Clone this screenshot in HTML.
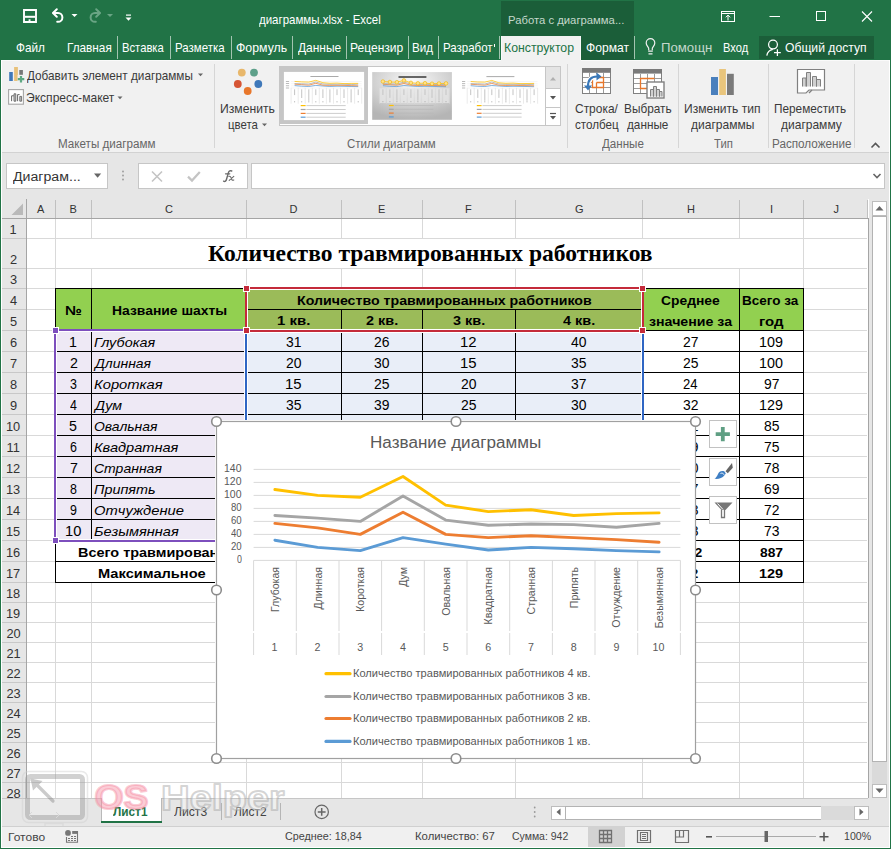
<!DOCTYPE html>
<html><head><meta charset="utf-8"><style>
html,body{margin:0;padding:0;width:891px;height:849px;overflow:hidden;background:#fff;}
.a{position:absolute;box-sizing:border-box;}
.t{position:absolute;white-space:nowrap;line-height:1;}
svg{position:absolute;overflow:visible;}
</style></head><body>
<div class="a" style="left:0px;top:0px;width:891px;height:60px;background:#217346;"></div>
<div class="a" style="left:501px;top:1px;width:133px;height:59px;background:#1b5e39;"></div>
<div class="a" style="left:501px;top:36px;width:80px;height:24px;background:#f1f1f1;"></div>
<div class="a" style="left:501px;top:36px;width:1px;height:24px;background:#fafafa;"></div>
<div class="a" style="left:580px;top:36px;width:1px;height:24px;background:#fafafa;"></div>
<svg style="left:0;top:0" width="140" height="34" viewBox="0 0 140 34">
<path d="M24 10h12v12h-12z" fill="none" stroke="#fff" stroke-width="1.9"/>
<rect x="25" y="15.8" width="10" height="2" fill="#fff"/>
<rect x="28.6" y="19.3" width="1.9" height="2.6" fill="#fff"/>
<g fill="none" stroke="#fff" stroke-width="2" stroke-linecap="round" stroke-linejoin="round">
<path d="M53.5 13H58a4.4 4.4 0 0 1 0 8.8h-0.8"/>
<path d="M56.8 9.3L53 13l3.8 3.7"/>
</g>
<path d="M71.5 14h6l-3 3z" fill="#fff"/>
<g fill="none" stroke="#6aa585" stroke-width="2" stroke-linecap="round" stroke-linejoin="round">
<path d="M99.5 13H95a4.4 4.4 0 0 0 0 8.8h0.8"/>
<path d="M96.2 9.3L100 13l-3.8 3.7"/>
</g>
<path d="M107 14h6l-3 3z" fill="#6aa585"/>
<path d="M126 14.5h5v1.2h-5z" fill="#fff"/>
<path d="M125.5 17.5h6l-3 3.2z" fill="#fff"/>
</svg>
<div class="t" style="left:259.10px;top:14.00px;font-family:'Liberation Sans', sans-serif;font-size:12.6px;color:#fff;font-weight:normal;font-style:normal;transform:scaleX(0.9120);transform-origin:0 0;">диаграммы.xlsx - Excel</div>
<div class="t" style="left:508.44px;top:15.00px;font-family:'Liberation Sans', sans-serif;font-size:11.8px;color:#c5d8cc;font-weight:normal;font-style:normal;transform:scaleX(0.9575);transform-origin:0 0;">Работа с диаграмма...</div>
<svg style="left:700px;top:0" width="191" height="34" viewBox="0 0 191 34">
<g fill="none" stroke="#fff" stroke-width="1">
<rect x="21.5" y="11.5" width="13" height="10"/>
<path d="M21.5 13.5h13"/>
<path d="M28 20.5v-5.5M25.8 17.3l2.2-2.2 2.2 2.2"/>
<path d="M69.5 16.5h10.5"/>
<rect x="116.5" y="11.5" width="9" height="9"/>
<path d="M162 11.5l10 10M172 11.5l-10 10" stroke-width="1.1"/>
</g></svg>
<div class="t" style="left:16.20px;top:42.00px;font-family:'Liberation Sans', sans-serif;font-size:12.8px;color:#fff;font-weight:normal;font-style:normal;transform:scaleX(0.9161);transform-origin:0 0;">Файл</div>
<div class="t" style="left:67.38px;top:42.00px;font-family:'Liberation Sans', sans-serif;font-size:12.8px;color:#fff;font-weight:normal;font-style:normal;transform:scaleX(0.9191);transform-origin:0 0;">Главная</div>
<div class="t" style="left:122.12px;top:42.00px;font-family:'Liberation Sans', sans-serif;font-size:12.8px;color:#fff;font-weight:normal;font-style:normal;transform:scaleX(0.8787);transform-origin:0 0;">Вставка</div>
<div class="t" style="left:174.50px;top:42.00px;font-family:'Liberation Sans', sans-serif;font-size:12.8px;color:#fff;font-weight:normal;font-style:normal;transform:scaleX(0.8964);transform-origin:0 0;">Разметка</div>
<div class="t" style="left:236.00px;top:42.00px;font-family:'Liberation Sans', sans-serif;font-size:12.8px;color:#fff;font-weight:normal;font-style:normal;transform:scaleX(0.9623);transform-origin:0 0;">Формуль</div>
<div class="t" style="left:298.00px;top:42.00px;font-family:'Liberation Sans', sans-serif;font-size:12.8px;color:#fff;font-weight:normal;font-style:normal;transform:scaleX(0.9348);transform-origin:0 0;">Данные</div>
<div class="t" style="left:350.06px;top:42.00px;font-family:'Liberation Sans', sans-serif;font-size:12.8px;color:#fff;font-weight:normal;font-style:normal;transform:scaleX(0.9400);transform-origin:0 0;">Рецензир</div>
<div class="t" style="left:412.09px;top:42.00px;font-family:'Liberation Sans', sans-serif;font-size:12.8px;color:#fff;font-weight:normal;font-style:normal;transform:scaleX(0.9091);transform-origin:0 0;">Вид</div>
<div class="t" style="left:442.70px;top:42.00px;font-family:'Liberation Sans', sans-serif;font-size:12.8px;color:#fff;font-weight:normal;font-style:normal;transform:scaleX(0.8981);transform-origin:0 0;">Разработ</div>
<div class="a" style="left:117px;top:36px;width:1px;height:23px;background:#a3c4b0;"></div>
<div class="a" style="left:170px;top:36px;width:1px;height:23px;background:#a3c4b0;"></div>
<div class="a" style="left:231px;top:36px;width:1px;height:23px;background:#a3c4b0;"></div>
<div class="a" style="left:292px;top:36px;width:1px;height:23px;background:#a3c4b0;"></div>
<div class="a" style="left:346px;top:36px;width:1px;height:23px;background:#a3c4b0;"></div>
<div class="a" style="left:408px;top:36px;width:1px;height:23px;background:#a3c4b0;"></div>
<div class="a" style="left:438px;top:36px;width:1px;height:23px;background:#a3c4b0;"></div>
<div class="a" style="left:499px;top:36px;width:1px;height:23px;background:#a3c4b0;"></div>
<div class="a" style="left:634px;top:36px;width:1px;height:23px;background:#a3c4b0;"></div>
<div class="a" style="left:494px;top:44px;width:1px;height:3px;background:#fff;"></div>
<div class="t" style="left:504.34px;top:42.00px;font-family:'Liberation Sans', sans-serif;font-size:12.8px;color:#217346;font-weight:normal;font-style:normal;transform:scaleX(0.9597);transform-origin:0 0;">Конструктор</div>
<div class="t" style="left:586.00px;top:42.00px;font-family:'Liberation Sans', sans-serif;font-size:12.8px;color:#fff;font-weight:normal;font-style:normal;transform:scaleX(0.9467);transform-origin:0 0;">Формат</div>
<div class="a" style="left:759px;top:36px;width:115px;height:23px;background:#1b5e39;"></div>
<svg style="left:0;top:0" width="891" height="60">
<g fill="none" stroke="#f0f0f0" stroke-width="1.2">
<path d="M648.7 50.2v-1.6c0-1.5-2.5-3-2.5-5.7a4.3 4.3 0 0 1 8.6 0c0 2.7-2.5 4.2-2.5 5.7v1.6"/>
<path d="M648.2 51.2h4.6M648.5 53.8h4"/>
</g>
<g fill="none" stroke="#fff" stroke-width="1.25">
<circle cx="773" cy="44.6" r="4.4"/>
<path d="M766.8 55.6c0.6-3.4 2.8-5.8 6-6.3"/>
<path d="M777.4 49.2v6.8M774 52.6h6.8"/>
</g></svg>
<div class="t" style="left:660.97px;top:42.00px;font-family:'Liberation Sans', sans-serif;font-size:12.8px;color:#c5d8cc;font-weight:normal;font-style:normal;transform:scaleX(1.0292);transform-origin:0 0;">Помощн</div>
<div class="t" style="left:723.43px;top:42.00px;font-family:'Liberation Sans', sans-serif;font-size:12.8px;color:#fff;font-weight:normal;font-style:normal;transform:scaleX(0.8679);transform-origin:0 0;">Вход</div>
<div class="t" style="left:785.20px;top:42.00px;font-family:'Liberation Sans', sans-serif;font-size:12.8px;color:#fff;font-weight:normal;font-style:normal;transform:scaleX(0.9482);transform-origin:0 0;">Общий доступ</div>
<div class="a" style="left:0px;top:60px;width:891px;height:92px;background:#f1f1f1;"></div>
<div class="a" style="left:1px;top:60px;width:500px;height:1px;background:#fafafa;"></div>
<div class="a" style="left:581px;top:60px;width:309px;height:1px;background:#fafafa;"></div>
<div class="a" style="left:0px;top:152px;width:891px;height:1px;background:#d2d2d2;"></div>
<div class="a" style="left:214px;top:64px;width:1px;height:84px;background:#d6d6d6;"></div>
<div class="a" style="left:567px;top:64px;width:1px;height:84px;background:#d6d6d6;"></div>
<div class="a" style="left:678px;top:64px;width:1px;height:84px;background:#d6d6d6;"></div>
<div class="a" style="left:768px;top:64px;width:1px;height:84px;background:#d6d6d6;"></div>
<div class="a" style="left:854px;top:64px;width:1px;height:84px;background:#d6d6d6;"></div>
<svg style="left:0;top:60px" width="891" height="91" viewBox="0 60 891 91">
<rect x="9.2" y="72" width="3.6" height="9" fill="#3f78b9"/>
<rect x="14.1" y="67" width="3.8" height="14" fill="#e8c17a"/>
<rect x="19.3" y="70" width="3.6" height="4.8" fill="#777"/>
<rect x="17.6" y="75" width="7" height="7" fill="#f1f1f1"/><path d="M21 76v6.5M17.8 79.2h6.5" stroke="#5ea883" stroke-width="2.2"/>
<rect x="8.6" y="89.6" width="14.8" height="14.6" fill="#fff" stroke="#a6a6a6" stroke-width="1.1"/>
<path d="M14 101.2v-7.4h1.8v7.4z" fill="#c8c8c8" stroke="#666" stroke-width="0.9"/>
<path d="M19.8 101.2v-4.8h1.8v4.8z" fill="#c8c8c8" stroke="#666" stroke-width="0.9"/>
<path d="M11.6 101.2v-5.4h2.2M17.6 101.2v-6.6h2" fill="none" stroke="#666" stroke-width="1"/>
<path d="M198 73.5h5l-2.5 2.8z" fill="#666"/>
<path d="M117.5 96.5h5l-2.5 2.8z" fill="#666"/>
<circle cx="241.8" cy="72.6" r="3.9" fill="#e8b76b"/>
<circle cx="254" cy="72.6" r="3.9" fill="#5ea08a"/>
<circle cx="237.8" cy="84" r="3.9" fill="#d65534"/>
<circle cx="258.3" cy="84" r="3.9" fill="#3f78b9"/>
<circle cx="247.7" cy="91" r="3.9" fill="#e8772b"/>
<path d="M262 123.5h5l-2.5 2.8z" fill="#666"/>
</svg>
<div class="t" style="left:27.00px;top:69.00px;font-family:'Liberation Sans', sans-serif;font-size:13.2px;color:#3a3a3a;font-weight:normal;font-style:normal;transform:scaleX(0.8903);transform-origin:0 0;">Добавить элемент диаграммы</div>
<div class="t" style="left:26.09px;top:91.00px;font-family:'Liberation Sans', sans-serif;font-size:13.2px;color:#3a3a3a;font-weight:normal;font-style:normal;transform:scaleX(0.9146);transform-origin:0 0;">Экспресс-макет</div>
<div class="t" style="left:58.05px;top:138.00px;font-family:'Liberation Sans', sans-serif;font-size:12.3px;color:#666;font-weight:normal;font-style:normal;transform:scaleX(0.9461);transform-origin:0 0;">Макеты диаграмм</div>
<div class="t" style="left:220.38px;top:102.00px;font-family:'Liberation Sans', sans-serif;font-size:13.2px;color:#3a3a3a;font-weight:normal;font-style:normal;transform:scaleX(0.9224);transform-origin:0 0;">Изменить</div>
<div class="t" style="left:228.43px;top:118.00px;font-family:'Liberation Sans', sans-serif;font-size:13.2px;color:#3a3a3a;font-weight:normal;font-style:normal;transform:scaleX(0.8676);transform-origin:0 0;">цвета</div>
<div class="t" style="left:347.00px;top:138.00px;font-family:'Liberation Sans', sans-serif;font-size:12.3px;color:#666;font-weight:normal;font-style:normal;transform:scaleX(0.9362);transform-origin:0 0;">Стили диаграмм</div>
<div class="t" style="left:575.30px;top:102.00px;font-family:'Liberation Sans', sans-serif;font-size:13.2px;color:#3a3a3a;font-weight:normal;font-style:normal;transform:scaleX(0.9062);transform-origin:0 0;">Строка/</div>
<div class="t" style="left:574.60px;top:118.00px;font-family:'Liberation Sans', sans-serif;font-size:13.2px;color:#3a3a3a;font-weight:normal;font-style:normal;transform:scaleX(0.8840);transform-origin:0 0;">столбец</div>
<div class="t" style="left:623.50px;top:102.00px;font-family:'Liberation Sans', sans-serif;font-size:13.2px;color:#3a3a3a;font-weight:normal;font-style:normal;transform:scaleX(0.8962);transform-origin:0 0;">Выбрать</div>
<div class="t" style="left:627.00px;top:118.00px;font-family:'Liberation Sans', sans-serif;font-size:13.2px;color:#3a3a3a;font-weight:normal;font-style:normal;transform:scaleX(0.8913);transform-origin:0 0;">данные</div>
<div class="t" style="left:602.00px;top:138.00px;font-family:'Liberation Sans', sans-serif;font-size:12.3px;color:#666;font-weight:normal;font-style:normal;transform:scaleX(0.9432);transform-origin:0 0;">Данные</div>
<div class="t" style="left:684.39px;top:102.00px;font-family:'Liberation Sans', sans-serif;font-size:13.2px;color:#3a3a3a;font-weight:normal;font-style:normal;transform:scaleX(0.9146);transform-origin:0 0;">Изменить тип</div>
<div class="t" style="left:691.00px;top:118.00px;font-family:'Liberation Sans', sans-serif;font-size:13.2px;color:#3a3a3a;font-weight:normal;font-style:normal;transform:scaleX(0.9130);transform-origin:0 0;">диаграммы</div>
<div class="t" style="left:714.40px;top:138.00px;font-family:'Liberation Sans', sans-serif;font-size:12.3px;color:#666;font-weight:normal;font-style:normal;transform:scaleX(0.9200);transform-origin:0 0;">Тип</div>
<div class="t" style="left:774.41px;top:102.00px;font-family:'Liberation Sans', sans-serif;font-size:13.2px;color:#3a3a3a;font-weight:normal;font-style:normal;transform:scaleX(0.8938);transform-origin:0 0;">Переместить</div>
<div class="t" style="left:780.70px;top:118.00px;font-family:'Liberation Sans', sans-serif;font-size:13.2px;color:#3a3a3a;font-weight:normal;font-style:normal;transform:scaleX(0.9104);transform-origin:0 0;">диаграмму</div>
<div class="t" style="left:771.55px;top:138.00px;font-family:'Liberation Sans', sans-serif;font-size:12.3px;color:#666;font-weight:normal;font-style:normal;transform:scaleX(0.9512);transform-origin:0 0;">Расположение</div>
<div class="a" style="left:0px;top:153px;width:891px;height:46px;background:#e6e6e6;"></div>
<div class="a" style="left:6px;top:163px;width:102px;height:26px;background:#fff;border:1px solid #c6c6c6;"></div>
<div class="a" style="left:138px;top:163px;width:110px;height:26px;background:#fff;border:1px solid #c6c6c6;"></div>
<div class="a" style="left:251px;top:163px;width:634px;height:26px;background:#fff;border:1px solid #c6c6c6;"></div>
<div class="t" style="left:12.80px;top:171.00px;font-family:'Liberation Sans', sans-serif;font-size:12.3px;color:#333;font-weight:normal;font-style:normal;transform:scaleX(1.1500);transform-origin:0 0;">Диаграм...</div>
<svg style="left:0;top:152px" width="891" height="47" viewBox="0 152 891 47">
<path d="M94 173.6h7.2l-3.6 4.2z" fill="#666"/>
<circle cx="123" cy="171.5" r="0.9" fill="#999"/><circle cx="123" cy="175.5" r="0.9" fill="#999"/><circle cx="123" cy="179.5" r="0.9" fill="#999"/>
<path d="M152 171.5l10 10M162 171.5l-10 10" stroke="#c4c4c4" stroke-width="1.6" fill="none"/>
<path d="M188 176.6l4 4 7.8-8.6" stroke="#c4c4c4" stroke-width="2.2" fill="none"/>
<path d="M873.5 174l3.5 3.5 3.5-3.5" stroke="#666" stroke-width="1.6" fill="none"/>
</svg>
<svg style="left:0;top:0" width="891" height="200"><g fill="none" stroke="#6a6a6a" stroke-linecap="round">
<path d="M223.6 181.2c1.4 0.8 2.6-0.2 3-2.2l1.9-6.6c0.5-1.6 1.8-2.1 3.3-1.4" stroke-width="1.4"/>
<path d="M225.5 173.8h4.3" stroke-width="1.2"/>
<path d="M228.8 176.4c1.2-0.4 1.8 0 2.2 1.2l0.6 1.6c0.4 1 1.2 1.2 2.2 0.8M233.8 176.4l-4.6 4" stroke-width="1.1"/>
</g></svg>
<div class="a" style="left:0px;top:199px;width:868px;height:19px;background:#e6e6e6;"></div>
<div class="a" style="left:0px;top:218px;width:26px;height:580px;background:#e6e6e6;"></div>
<div class="a" style="left:26px;top:218px;width:842px;height:580px;background:#fff;"></div>
<svg style="left:0;top:199px" width="26" height="19"><path d="M23 4.5V16H11.5z" fill="#b9b9b9"/></svg>
<div class="a" style="left:26px;top:200px;width:1px;height:18px;background:#c0c0c0;"></div>
<div class="a" style="left:55px;top:200px;width:1px;height:18px;background:#c0c0c0;"></div>
<div class="a" style="left:91px;top:200px;width:1px;height:18px;background:#c0c0c0;"></div>
<div class="a" style="left:246px;top:200px;width:1px;height:18px;background:#c0c0c0;"></div>
<div class="a" style="left:341px;top:200px;width:1px;height:18px;background:#c0c0c0;"></div>
<div class="a" style="left:422px;top:200px;width:1px;height:18px;background:#c0c0c0;"></div>
<div class="a" style="left:515px;top:200px;width:1px;height:18px;background:#c0c0c0;"></div>
<div class="a" style="left:642px;top:200px;width:1px;height:18px;background:#c0c0c0;"></div>
<div class="a" style="left:739px;top:200px;width:1px;height:18px;background:#c0c0c0;"></div>
<div class="a" style="left:803px;top:200px;width:1px;height:18px;background:#c0c0c0;"></div>
<div class="a" style="left:0px;top:218px;width:869px;height:1px;background:#a5a5a5;"></div>
<div class="a" style="left:26px;top:199px;width:1px;height:599px;background:#a5a5a5;"></div>
<div class="a" style="left:867px;top:200px;width:1px;height:18px;background:#c0c0c0;"></div>
<div class="a" style="left:868px;top:218px;width:1px;height:580px;background:#a5a5a5;"></div>
<div class="a" style="left:0px;top:238px;width:26px;height:1px;background:#c8c8c8;"></div>
<div class="a" style="left:0px;top:268px;width:26px;height:1px;background:#c8c8c8;"></div>
<div class="a" style="left:0px;top:288px;width:26px;height:1px;background:#c8c8c8;"></div>
<div class="a" style="left:0px;top:309px;width:26px;height:1px;background:#c8c8c8;"></div>
<div class="a" style="left:0px;top:330px;width:26px;height:1px;background:#c8c8c8;"></div>
<div class="a" style="left:0px;top:351px;width:26px;height:1px;background:#c8c8c8;"></div>
<div class="a" style="left:0px;top:372px;width:26px;height:1px;background:#c8c8c8;"></div>
<div class="a" style="left:0px;top:393px;width:26px;height:1px;background:#c8c8c8;"></div>
<div class="a" style="left:0px;top:414px;width:26px;height:1px;background:#c8c8c8;"></div>
<div class="a" style="left:0px;top:435px;width:26px;height:1px;background:#c8c8c8;"></div>
<div class="a" style="left:0px;top:456px;width:26px;height:1px;background:#c8c8c8;"></div>
<div class="a" style="left:0px;top:477px;width:26px;height:1px;background:#c8c8c8;"></div>
<div class="a" style="left:0px;top:498px;width:26px;height:1px;background:#c8c8c8;"></div>
<div class="a" style="left:0px;top:519px;width:26px;height:1px;background:#c8c8c8;"></div>
<div class="a" style="left:0px;top:540px;width:26px;height:1px;background:#c8c8c8;"></div>
<div class="a" style="left:0px;top:561px;width:26px;height:1px;background:#c8c8c8;"></div>
<div class="a" style="left:0px;top:582px;width:26px;height:1px;background:#c8c8c8;"></div>
<div class="a" style="left:0px;top:602px;width:26px;height:1px;background:#c8c8c8;"></div>
<div class="a" style="left:0px;top:622px;width:26px;height:1px;background:#c8c8c8;"></div>
<div class="a" style="left:0px;top:642px;width:26px;height:1px;background:#c8c8c8;"></div>
<div class="a" style="left:0px;top:662px;width:26px;height:1px;background:#c8c8c8;"></div>
<div class="a" style="left:0px;top:682px;width:26px;height:1px;background:#c8c8c8;"></div>
<div class="a" style="left:0px;top:702px;width:26px;height:1px;background:#c8c8c8;"></div>
<div class="a" style="left:0px;top:722px;width:26px;height:1px;background:#c8c8c8;"></div>
<div class="a" style="left:0px;top:742px;width:26px;height:1px;background:#c8c8c8;"></div>
<div class="a" style="left:0px;top:762px;width:26px;height:1px;background:#c8c8c8;"></div>
<div class="a" style="left:0px;top:782px;width:26px;height:1px;background:#c8c8c8;"></div>
<div class="a" style="left:0px;top:802px;width:26px;height:1px;background:#c8c8c8;"></div>
<div class="t" style="left:37.00px;top:204.00px;font-family:'Liberation Sans', sans-serif;font-size:11px;color:#333;font-weight:normal;font-style:normal;">A</div>
<div class="t" style="left:69.50px;top:204.00px;font-family:'Liberation Sans', sans-serif;font-size:11px;color:#333;font-weight:normal;font-style:normal;">B</div>
<div class="t" style="left:165.00px;top:204.00px;font-family:'Liberation Sans', sans-serif;font-size:11px;color:#333;font-weight:normal;font-style:normal;">C</div>
<div class="t" style="left:289.50px;top:204.00px;font-family:'Liberation Sans', sans-serif;font-size:11px;color:#333;font-weight:normal;font-style:normal;">D</div>
<div class="t" style="left:378.00px;top:204.00px;font-family:'Liberation Sans', sans-serif;font-size:11px;color:#333;font-weight:normal;font-style:normal;">E</div>
<div class="t" style="left:465.00px;top:204.00px;font-family:'Liberation Sans', sans-serif;font-size:11px;color:#333;font-weight:normal;font-style:normal;">F</div>
<div class="t" style="left:575.00px;top:204.00px;font-family:'Liberation Sans', sans-serif;font-size:11px;color:#333;font-weight:normal;font-style:normal;">G</div>
<div class="t" style="left:687.00px;top:204.00px;font-family:'Liberation Sans', sans-serif;font-size:11px;color:#333;font-weight:normal;font-style:normal;">H</div>
<div class="t" style="left:770.00px;top:204.00px;font-family:'Liberation Sans', sans-serif;font-size:11px;color:#333;font-weight:normal;font-style:normal;">I</div>
<div class="t" style="left:833.50px;top:204.00px;font-family:'Liberation Sans', sans-serif;font-size:11px;color:#333;font-weight:normal;font-style:normal;">J</div>
<div class="t" style="left:9.50px;top:224.00px;font-family:'Liberation Sans', sans-serif;font-size:12.8px;color:#333;font-weight:normal;font-style:normal;">1</div>
<div class="t" style="left:10.00px;top:254.00px;font-family:'Liberation Sans', sans-serif;font-size:12.8px;color:#333;font-weight:normal;font-style:normal;">2</div>
<div class="t" style="left:10.00px;top:274.00px;font-family:'Liberation Sans', sans-serif;font-size:12.8px;color:#333;font-weight:normal;font-style:normal;">3</div>
<div class="t" style="left:10.00px;top:295.00px;font-family:'Liberation Sans', sans-serif;font-size:12.8px;color:#333;font-weight:normal;font-style:normal;">4</div>
<div class="t" style="left:10.00px;top:316.00px;font-family:'Liberation Sans', sans-serif;font-size:12.8px;color:#333;font-weight:normal;font-style:normal;">5</div>
<div class="t" style="left:10.00px;top:337.00px;font-family:'Liberation Sans', sans-serif;font-size:12.8px;color:#333;font-weight:normal;font-style:normal;">6</div>
<div class="t" style="left:10.00px;top:358.00px;font-family:'Liberation Sans', sans-serif;font-size:12.8px;color:#333;font-weight:normal;font-style:normal;">7</div>
<div class="t" style="left:10.00px;top:379.00px;font-family:'Liberation Sans', sans-serif;font-size:12.8px;color:#333;font-weight:normal;font-style:normal;">8</div>
<div class="t" style="left:10.00px;top:400.00px;font-family:'Liberation Sans', sans-serif;font-size:12.8px;color:#333;font-weight:normal;font-style:normal;">9</div>
<div class="t" style="left:6.00px;top:421.00px;font-family:'Liberation Sans', sans-serif;font-size:12.8px;color:#333;font-weight:normal;font-style:normal;">10</div>
<div class="t" style="left:6.50px;top:442.00px;font-family:'Liberation Sans', sans-serif;font-size:12.8px;color:#333;font-weight:normal;font-style:normal;">11</div>
<div class="t" style="left:6.00px;top:463.00px;font-family:'Liberation Sans', sans-serif;font-size:12.8px;color:#333;font-weight:normal;font-style:normal;">12</div>
<div class="t" style="left:6.00px;top:484.00px;font-family:'Liberation Sans', sans-serif;font-size:12.8px;color:#333;font-weight:normal;font-style:normal;">13</div>
<div class="t" style="left:6.00px;top:505.00px;font-family:'Liberation Sans', sans-serif;font-size:12.8px;color:#333;font-weight:normal;font-style:normal;">14</div>
<div class="t" style="left:6.00px;top:526.00px;font-family:'Liberation Sans', sans-serif;font-size:12.8px;color:#333;font-weight:normal;font-style:normal;">15</div>
<div class="t" style="left:6.00px;top:547.00px;font-family:'Liberation Sans', sans-serif;font-size:12.8px;color:#333;font-weight:normal;font-style:normal;">16</div>
<div class="t" style="left:6.00px;top:568.00px;font-family:'Liberation Sans', sans-serif;font-size:12.8px;color:#333;font-weight:normal;font-style:normal;">17</div>
<div class="t" style="left:6.00px;top:588.00px;font-family:'Liberation Sans', sans-serif;font-size:12.8px;color:#333;font-weight:normal;font-style:normal;">18</div>
<div class="t" style="left:6.00px;top:608.00px;font-family:'Liberation Sans', sans-serif;font-size:12.8px;color:#333;font-weight:normal;font-style:normal;">19</div>
<div class="t" style="left:6.50px;top:628.00px;font-family:'Liberation Sans', sans-serif;font-size:12.8px;color:#333;font-weight:normal;font-style:normal;">20</div>
<div class="t" style="left:6.50px;top:648.00px;font-family:'Liberation Sans', sans-serif;font-size:12.8px;color:#333;font-weight:normal;font-style:normal;">21</div>
<div class="t" style="left:6.50px;top:668.00px;font-family:'Liberation Sans', sans-serif;font-size:12.8px;color:#333;font-weight:normal;font-style:normal;">22</div>
<div class="t" style="left:6.50px;top:688.00px;font-family:'Liberation Sans', sans-serif;font-size:12.8px;color:#333;font-weight:normal;font-style:normal;">23</div>
<div class="t" style="left:6.50px;top:708.00px;font-family:'Liberation Sans', sans-serif;font-size:12.8px;color:#333;font-weight:normal;font-style:normal;">24</div>
<div class="t" style="left:6.50px;top:728.00px;font-family:'Liberation Sans', sans-serif;font-size:12.8px;color:#333;font-weight:normal;font-style:normal;">25</div>
<div class="t" style="left:6.50px;top:748.00px;font-family:'Liberation Sans', sans-serif;font-size:12.8px;color:#333;font-weight:normal;font-style:normal;">26</div>
<div class="t" style="left:6.50px;top:768.00px;font-family:'Liberation Sans', sans-serif;font-size:12.8px;color:#333;font-weight:normal;font-style:normal;">27</div>
<div class="a" style="left:27px;top:238px;width:840px;height:1px;background:#d9d9d9;"></div>
<div class="a" style="left:27px;top:268px;width:840px;height:1px;background:#d9d9d9;"></div>
<div class="a" style="left:27px;top:288px;width:840px;height:1px;background:#d9d9d9;"></div>
<div class="a" style="left:27px;top:309px;width:840px;height:1px;background:#d9d9d9;"></div>
<div class="a" style="left:27px;top:330px;width:840px;height:1px;background:#d9d9d9;"></div>
<div class="a" style="left:27px;top:351px;width:840px;height:1px;background:#d9d9d9;"></div>
<div class="a" style="left:27px;top:372px;width:840px;height:1px;background:#d9d9d9;"></div>
<div class="a" style="left:27px;top:393px;width:840px;height:1px;background:#d9d9d9;"></div>
<div class="a" style="left:27px;top:414px;width:840px;height:1px;background:#d9d9d9;"></div>
<div class="a" style="left:27px;top:435px;width:840px;height:1px;background:#d9d9d9;"></div>
<div class="a" style="left:27px;top:456px;width:840px;height:1px;background:#d9d9d9;"></div>
<div class="a" style="left:27px;top:477px;width:840px;height:1px;background:#d9d9d9;"></div>
<div class="a" style="left:27px;top:498px;width:840px;height:1px;background:#d9d9d9;"></div>
<div class="a" style="left:27px;top:519px;width:840px;height:1px;background:#d9d9d9;"></div>
<div class="a" style="left:27px;top:540px;width:840px;height:1px;background:#d9d9d9;"></div>
<div class="a" style="left:27px;top:561px;width:840px;height:1px;background:#d9d9d9;"></div>
<div class="a" style="left:27px;top:582px;width:840px;height:1px;background:#d9d9d9;"></div>
<div class="a" style="left:27px;top:602px;width:840px;height:1px;background:#d9d9d9;"></div>
<div class="a" style="left:27px;top:622px;width:840px;height:1px;background:#d9d9d9;"></div>
<div class="a" style="left:27px;top:642px;width:840px;height:1px;background:#d9d9d9;"></div>
<div class="a" style="left:27px;top:662px;width:840px;height:1px;background:#d9d9d9;"></div>
<div class="a" style="left:27px;top:682px;width:840px;height:1px;background:#d9d9d9;"></div>
<div class="a" style="left:27px;top:702px;width:840px;height:1px;background:#d9d9d9;"></div>
<div class="a" style="left:27px;top:722px;width:840px;height:1px;background:#d9d9d9;"></div>
<div class="a" style="left:27px;top:742px;width:840px;height:1px;background:#d9d9d9;"></div>
<div class="a" style="left:27px;top:762px;width:840px;height:1px;background:#d9d9d9;"></div>
<div class="a" style="left:27px;top:782px;width:840px;height:1px;background:#d9d9d9;"></div>
<div class="a" style="left:55px;top:219px;width:1px;height:579px;background:#d9d9d9;"></div>
<div class="a" style="left:91px;top:219px;width:1px;height:19px;background:#d9d9d9;"></div>
<div class="a" style="left:91px;top:269px;width:1px;height:529px;background:#d9d9d9;"></div>
<div class="a" style="left:246px;top:219px;width:1px;height:19px;background:#d9d9d9;"></div>
<div class="a" style="left:246px;top:269px;width:1px;height:529px;background:#d9d9d9;"></div>
<div class="a" style="left:341px;top:219px;width:1px;height:19px;background:#d9d9d9;"></div>
<div class="a" style="left:341px;top:269px;width:1px;height:529px;background:#d9d9d9;"></div>
<div class="a" style="left:422px;top:219px;width:1px;height:19px;background:#d9d9d9;"></div>
<div class="a" style="left:422px;top:269px;width:1px;height:529px;background:#d9d9d9;"></div>
<div class="a" style="left:515px;top:219px;width:1px;height:19px;background:#d9d9d9;"></div>
<div class="a" style="left:515px;top:269px;width:1px;height:529px;background:#d9d9d9;"></div>
<div class="a" style="left:642px;top:219px;width:1px;height:19px;background:#d9d9d9;"></div>
<div class="a" style="left:642px;top:269px;width:1px;height:529px;background:#d9d9d9;"></div>
<div class="a" style="left:739px;top:219px;width:1px;height:19px;background:#d9d9d9;"></div>
<div class="a" style="left:739px;top:269px;width:1px;height:529px;background:#d9d9d9;"></div>
<div class="a" style="left:803px;top:219px;width:1px;height:579px;background:#d9d9d9;"></div>
<div class="t" style="left:207.60px;top:243.00px;font-family:'Liberation Serif', serif;font-size:22.5px;color:#000;font-weight:bold;font-style:normal;transform:scaleX(1.0464);transform-origin:0 0;">Количество травмированных работников</div>
<div class="a" style="left:55px;top:288px;width:191px;height:42px;background:#92d050;"></div>
<div class="a" style="left:642px;top:288px;width:161px;height:42px;background:#92d050;"></div>
<div class="a" style="left:246px;top:288px;width:396px;height:42px;background:#9bbb59;"></div>
<div class="a" style="left:55px;top:330px;width:191px;height:210px;background:#eee9f5;"></div>
<div class="a" style="left:246px;top:330px;width:396px;height:210px;background:#e9eef8;"></div>
<div class="a" style="left:55px;top:540px;width:748px;height:42px;background:#fff;"></div>
<div class="a" style="left:642px;top:330px;width:161px;height:210px;background:#fff;"></div>
<div class="a" style="left:55px;top:288px;width:749px;height:1px;background:#000;"></div>
<div class="a" style="left:246px;top:309px;width:396px;height:1px;background:#000;"></div>
<div class="a" style="left:55px;top:330px;width:749px;height:1px;background:#000;"></div>
<div class="a" style="left:55px;top:351px;width:749px;height:1px;background:#000;"></div>
<div class="a" style="left:55px;top:372px;width:749px;height:1px;background:#000;"></div>
<div class="a" style="left:55px;top:393px;width:749px;height:1px;background:#000;"></div>
<div class="a" style="left:55px;top:414px;width:749px;height:1px;background:#000;"></div>
<div class="a" style="left:55px;top:435px;width:749px;height:1px;background:#000;"></div>
<div class="a" style="left:55px;top:456px;width:749px;height:1px;background:#000;"></div>
<div class="a" style="left:55px;top:477px;width:749px;height:1px;background:#000;"></div>
<div class="a" style="left:55px;top:498px;width:749px;height:1px;background:#000;"></div>
<div class="a" style="left:55px;top:519px;width:749px;height:1px;background:#000;"></div>
<div class="a" style="left:55px;top:540px;width:749px;height:1px;background:#000;"></div>
<div class="a" style="left:55px;top:561px;width:749px;height:1px;background:#000;"></div>
<div class="a" style="left:55px;top:582px;width:749px;height:1px;background:#000;"></div>
<div class="a" style="left:55px;top:288px;width:1px;height:295px;background:#000;"></div>
<div class="a" style="left:91px;top:288px;width:1px;height:253px;background:#000;"></div>
<div class="a" style="left:246px;top:288px;width:1px;height:295px;background:#000;"></div>
<div class="a" style="left:642px;top:288px;width:1px;height:295px;background:#000;"></div>
<div class="a" style="left:739px;top:288px;width:1px;height:295px;background:#000;"></div>
<div class="a" style="left:803px;top:288px;width:1px;height:295px;background:#000;"></div>
<div class="a" style="left:341px;top:309px;width:1px;height:232px;background:#000;"></div>
<div class="a" style="left:422px;top:309px;width:1px;height:232px;background:#000;"></div>
<div class="a" style="left:515px;top:309px;width:1px;height:232px;background:#000;"></div>
<div class="a" style="left:246px;top:540px;width:1px;height:43px;background:#000;"></div>
<div class="t" style="left:64.68px;top:304.00px;font-family:'Liberation Sans', sans-serif;font-size:13.5px;color:#000;font-weight:bold;font-style:normal;transform:scaleX(1.1214);transform-origin:0 0;">№</div>
<div class="t" style="left:111.87px;top:304.00px;font-family:'Liberation Sans', sans-serif;font-size:13.5px;color:#000;font-weight:bold;font-style:normal;transform:scaleX(1.0282);transform-origin:0 0;">Название шахты</div>
<div class="t" style="left:297.35px;top:294.00px;font-family:'Liberation Sans', sans-serif;font-size:13.5px;color:#000;font-weight:bold;font-style:normal;transform:scaleX(1.0502);transform-origin:0 0;">Количество травмированных работников</div>
<div class="t" style="left:276.89px;top:314.00px;font-family:'Liberation Sans', sans-serif;font-size:13.5px;color:#000;font-weight:bold;font-style:normal;transform:scaleX(1.1071);transform-origin:0 0;">1 кв.</div>
<div class="t" style="left:366.00px;top:314.00px;font-family:'Liberation Sans', sans-serif;font-size:13.5px;color:#000;font-weight:bold;font-style:normal;transform:scaleX(1.0690);transform-origin:0 0;">2 кв.</div>
<div class="t" style="left:453.00px;top:314.00px;font-family:'Liberation Sans', sans-serif;font-size:13.5px;color:#000;font-weight:bold;font-style:normal;transform:scaleX(1.0690);transform-origin:0 0;">3 кв.</div>
<div class="t" style="left:563.00px;top:314.00px;font-family:'Liberation Sans', sans-serif;font-size:13.5px;color:#000;font-weight:bold;font-style:normal;transform:scaleX(1.0690);transform-origin:0 0;">4 кв.</div>
<div class="t" style="left:661.40px;top:294.00px;font-family:'Liberation Sans', sans-serif;font-size:13.5px;color:#000;font-weight:bold;font-style:normal;transform:scaleX(1.0246);transform-origin:0 0;">Среднее</div>
<div class="t" style="left:648.60px;top:315.00px;font-family:'Liberation Sans', sans-serif;font-size:13.5px;color:#000;font-weight:bold;font-style:normal;transform:scaleX(1.0500);transform-origin:0 0;">значение за</div>
<div class="t" style="left:742.00px;top:294.00px;font-family:'Liberation Sans', sans-serif;font-size:13.5px;color:#000;font-weight:bold;font-style:normal;">Всего за</div>
<div class="t" style="left:758.69px;top:315.00px;font-family:'Liberation Sans', sans-serif;font-size:13.5px;color:#000;font-weight:bold;font-style:normal;transform:scaleX(1.1095);transform-origin:0 0;">год</div>
<div class="t" style="left:68.94px;top:335.00px;font-family:'Liberation Sans', sans-serif;font-size:14px;color:#000;font-weight:normal;font-style:normal;transform:scaleX(1.0143);transform-origin:0 0;">1</div>
<div class="t" style="left:94.20px;top:336.00px;font-family:'Liberation Sans', sans-serif;font-size:13.6px;color:#000;font-weight:normal;font-style:italic;transform:scaleX(1.0569);transform-origin:0 0;">Глубокая</div>
<div class="t" style="left:286.05px;top:335.00px;font-family:'Liberation Sans', sans-serif;font-size:14px;color:#000;font-weight:normal;font-style:normal;transform:scaleX(0.9933);transform-origin:0 0;">31</div>
<div class="t" style="left:374.05px;top:335.00px;font-family:'Liberation Sans', sans-serif;font-size:14px;color:#000;font-weight:normal;font-style:normal;transform:scaleX(0.9933);transform-origin:0 0;">26</div>
<div class="t" style="left:459.99px;top:335.00px;font-family:'Liberation Sans', sans-serif;font-size:14px;color:#000;font-weight:normal;font-style:normal;transform:scaleX(1.0643);transform-origin:0 0;">12</div>
<div class="t" style="left:571.05px;top:335.00px;font-family:'Liberation Sans', sans-serif;font-size:14px;color:#000;font-weight:normal;font-style:normal;transform:scaleX(0.9933);transform-origin:0 0;">40</div>
<div class="t" style="left:683.35px;top:335.00px;font-family:'Liberation Sans', sans-serif;font-size:14px;color:#000;font-weight:normal;font-style:normal;transform:scaleX(0.9933);transform-origin:0 0;">27</div>
<div class="t" style="left:759.23px;top:335.00px;font-family:'Liberation Sans', sans-serif;font-size:14px;color:#000;font-weight:normal;font-style:normal;transform:scaleX(1.0227);transform-origin:0 0;">109</div>
<div class="t" style="left:69.95px;top:356.00px;font-family:'Liberation Sans', sans-serif;font-size:14px;color:#000;font-weight:normal;font-style:normal;transform:scaleX(1.0143);transform-origin:0 0;">2</div>
<div class="t" style="left:95.23px;top:357.00px;font-family:'Liberation Sans', sans-serif;font-size:13.6px;color:#000;font-weight:normal;font-style:italic;transform:scaleX(1.0268);transform-origin:0 0;">Длинная</div>
<div class="t" style="left:286.05px;top:356.00px;font-family:'Liberation Sans', sans-serif;font-size:14px;color:#000;font-weight:normal;font-style:normal;transform:scaleX(0.9933);transform-origin:0 0;">20</div>
<div class="t" style="left:374.05px;top:356.00px;font-family:'Liberation Sans', sans-serif;font-size:14px;color:#000;font-weight:normal;font-style:normal;transform:scaleX(0.9933);transform-origin:0 0;">30</div>
<div class="t" style="left:459.99px;top:356.00px;font-family:'Liberation Sans', sans-serif;font-size:14px;color:#000;font-weight:normal;font-style:normal;transform:scaleX(1.0643);transform-origin:0 0;">15</div>
<div class="t" style="left:571.05px;top:356.00px;font-family:'Liberation Sans', sans-serif;font-size:14px;color:#000;font-weight:normal;font-style:normal;transform:scaleX(0.9933);transform-origin:0 0;">35</div>
<div class="t" style="left:683.35px;top:356.00px;font-family:'Liberation Sans', sans-serif;font-size:14px;color:#000;font-weight:normal;font-style:normal;transform:scaleX(0.9933);transform-origin:0 0;">25</div>
<div class="t" style="left:759.23px;top:356.00px;font-family:'Liberation Sans', sans-serif;font-size:14px;color:#000;font-weight:normal;font-style:normal;transform:scaleX(1.0227);transform-origin:0 0;">100</div>
<div class="t" style="left:69.95px;top:377.00px;font-family:'Liberation Sans', sans-serif;font-size:14px;color:#000;font-weight:normal;font-style:normal;transform:scaleX(0.8875);transform-origin:0 0;">3</div>
<div class="t" style="left:94.20px;top:378.00px;font-family:'Liberation Sans', sans-serif;font-size:13.6px;color:#000;font-weight:normal;font-style:italic;transform:scaleX(1.0841);transform-origin:0 0;">Короткая</div>
<div class="t" style="left:284.99px;top:377.00px;font-family:'Liberation Sans', sans-serif;font-size:14px;color:#000;font-weight:normal;font-style:normal;transform:scaleX(1.0643);transform-origin:0 0;">15</div>
<div class="t" style="left:374.05px;top:377.00px;font-family:'Liberation Sans', sans-serif;font-size:14px;color:#000;font-weight:normal;font-style:normal;transform:scaleX(0.9933);transform-origin:0 0;">25</div>
<div class="t" style="left:461.05px;top:377.00px;font-family:'Liberation Sans', sans-serif;font-size:14px;color:#000;font-weight:normal;font-style:normal;transform:scaleX(0.9933);transform-origin:0 0;">20</div>
<div class="t" style="left:571.05px;top:377.00px;font-family:'Liberation Sans', sans-serif;font-size:14px;color:#000;font-weight:normal;font-style:normal;transform:scaleX(0.9933);transform-origin:0 0;">37</div>
<div class="t" style="left:683.35px;top:377.00px;font-family:'Liberation Sans', sans-serif;font-size:14px;color:#000;font-weight:normal;font-style:normal;transform:scaleX(0.9312);transform-origin:0 0;">24</div>
<div class="t" style="left:764.05px;top:377.00px;font-family:'Liberation Sans', sans-serif;font-size:14px;color:#000;font-weight:normal;font-style:normal;transform:scaleX(0.9933);transform-origin:0 0;">97</div>
<div class="t" style="left:69.95px;top:398.00px;font-family:'Liberation Sans', sans-serif;font-size:14px;color:#000;font-weight:normal;font-style:normal;transform:scaleX(0.8875);transform-origin:0 0;">4</div>
<div class="t" style="left:95.24px;top:399.00px;font-family:'Liberation Sans', sans-serif;font-size:13.6px;color:#000;font-weight:normal;font-style:italic;transform:scaleX(1.0444);transform-origin:0 0;">Дум</div>
<div class="t" style="left:286.05px;top:398.00px;font-family:'Liberation Sans', sans-serif;font-size:14px;color:#000;font-weight:normal;font-style:normal;transform:scaleX(0.9933);transform-origin:0 0;">35</div>
<div class="t" style="left:374.05px;top:398.00px;font-family:'Liberation Sans', sans-serif;font-size:14px;color:#000;font-weight:normal;font-style:normal;transform:scaleX(0.9933);transform-origin:0 0;">39</div>
<div class="t" style="left:461.05px;top:398.00px;font-family:'Liberation Sans', sans-serif;font-size:14px;color:#000;font-weight:normal;font-style:normal;transform:scaleX(0.9933);transform-origin:0 0;">25</div>
<div class="t" style="left:571.05px;top:398.00px;font-family:'Liberation Sans', sans-serif;font-size:14px;color:#000;font-weight:normal;font-style:normal;transform:scaleX(0.9933);transform-origin:0 0;">30</div>
<div class="t" style="left:683.35px;top:398.00px;font-family:'Liberation Sans', sans-serif;font-size:14px;color:#000;font-weight:normal;font-style:normal;transform:scaleX(0.9933);transform-origin:0 0;">32</div>
<div class="t" style="left:759.23px;top:398.00px;font-family:'Liberation Sans', sans-serif;font-size:14px;color:#000;font-weight:normal;font-style:normal;transform:scaleX(1.0227);transform-origin:0 0;">129</div>
<div class="t" style="left:68.94px;top:419.00px;font-family:'Liberation Sans', sans-serif;font-size:14px;color:#000;font-weight:normal;font-style:normal;transform:scaleX(1.0143);transform-origin:0 0;">5</div>
<div class="t" style="left:94.20px;top:420.00px;font-family:'Liberation Sans', sans-serif;font-size:13.6px;color:#000;font-weight:normal;font-style:italic;transform:scaleX(1.0258);transform-origin:0 0;">Овальная</div>
<div class="t" style="left:286.05px;top:419.00px;font-family:'Liberation Sans', sans-serif;font-size:14px;color:#000;font-weight:normal;font-style:normal;transform:scaleX(0.9933);transform-origin:0 0;">25</div>
<div class="t" style="left:372.99px;top:419.00px;font-family:'Liberation Sans', sans-serif;font-size:14px;color:#000;font-weight:normal;font-style:normal;transform:scaleX(1.0643);transform-origin:0 0;">15</div>
<div class="t" style="left:461.05px;top:419.00px;font-family:'Liberation Sans', sans-serif;font-size:14px;color:#000;font-weight:normal;font-style:normal;transform:scaleX(0.9933);transform-origin:0 0;">22</div>
<div class="t" style="left:571.05px;top:419.00px;font-family:'Liberation Sans', sans-serif;font-size:14px;color:#000;font-weight:normal;font-style:normal;transform:scaleX(0.9933);transform-origin:0 0;">23</div>
<div class="t" style="left:683.35px;top:419.00px;font-family:'Liberation Sans', sans-serif;font-size:14px;color:#000;font-weight:normal;font-style:normal;transform:scaleX(0.9933);transform-origin:0 0;">21</div>
<div class="t" style="left:764.05px;top:419.00px;font-family:'Liberation Sans', sans-serif;font-size:14px;color:#000;font-weight:normal;font-style:normal;transform:scaleX(0.9933);transform-origin:0 0;">85</div>
<div class="t" style="left:69.95px;top:440.00px;font-family:'Liberation Sans', sans-serif;font-size:14px;color:#000;font-weight:normal;font-style:normal;transform:scaleX(0.8875);transform-origin:0 0;">6</div>
<div class="t" style="left:94.20px;top:441.00px;font-family:'Liberation Sans', sans-serif;font-size:13.6px;color:#000;font-weight:normal;font-style:italic;transform:scaleX(1.0734);transform-origin:0 0;">Квадратная</div>
<div class="t" style="left:284.99px;top:440.00px;font-family:'Liberation Sans', sans-serif;font-size:14px;color:#000;font-weight:normal;font-style:normal;transform:scaleX(1.0643);transform-origin:0 0;">16</div>
<div class="t" style="left:372.99px;top:440.00px;font-family:'Liberation Sans', sans-serif;font-size:14px;color:#000;font-weight:normal;font-style:normal;transform:scaleX(1.0643);transform-origin:0 0;">19</div>
<div class="t" style="left:459.99px;top:440.00px;font-family:'Liberation Sans', sans-serif;font-size:14px;color:#000;font-weight:normal;font-style:normal;transform:scaleX(1.0643);transform-origin:0 0;">19</div>
<div class="t" style="left:571.05px;top:440.00px;font-family:'Liberation Sans', sans-serif;font-size:14px;color:#000;font-weight:normal;font-style:normal;transform:scaleX(0.9933);transform-origin:0 0;">21</div>
<div class="t" style="left:682.29px;top:440.00px;font-family:'Liberation Sans', sans-serif;font-size:14px;color:#000;font-weight:normal;font-style:normal;transform:scaleX(1.0643);transform-origin:0 0;">19</div>
<div class="t" style="left:764.05px;top:440.00px;font-family:'Liberation Sans', sans-serif;font-size:14px;color:#000;font-weight:normal;font-style:normal;transform:scaleX(0.9933);transform-origin:0 0;">75</div>
<div class="t" style="left:69.95px;top:461.00px;font-family:'Liberation Sans', sans-serif;font-size:14px;color:#000;font-weight:normal;font-style:normal;transform:scaleX(1.0143);transform-origin:0 0;">7</div>
<div class="t" style="left:94.20px;top:462.00px;font-family:'Liberation Sans', sans-serif;font-size:13.6px;color:#000;font-weight:normal;font-style:italic;transform:scaleX(1.0303);transform-origin:0 0;">Странная</div>
<div class="t" style="left:286.05px;top:461.00px;font-family:'Liberation Sans', sans-serif;font-size:14px;color:#000;font-weight:normal;font-style:normal;transform:scaleX(0.9933);transform-origin:0 0;">20</div>
<div class="t" style="left:372.99px;top:461.00px;font-family:'Liberation Sans', sans-serif;font-size:14px;color:#000;font-weight:normal;font-style:normal;transform:scaleX(1.0643);transform-origin:0 0;">18</div>
<div class="t" style="left:459.99px;top:461.00px;font-family:'Liberation Sans', sans-serif;font-size:14px;color:#000;font-weight:normal;font-style:normal;transform:scaleX(1.0643);transform-origin:0 0;">18</div>
<div class="t" style="left:571.05px;top:461.00px;font-family:'Liberation Sans', sans-serif;font-size:14px;color:#000;font-weight:normal;font-style:normal;transform:scaleX(0.9933);transform-origin:0 0;">22</div>
<div class="t" style="left:683.35px;top:461.00px;font-family:'Liberation Sans', sans-serif;font-size:14px;color:#000;font-weight:normal;font-style:normal;transform:scaleX(0.9933);transform-origin:0 0;">20</div>
<div class="t" style="left:764.05px;top:461.00px;font-family:'Liberation Sans', sans-serif;font-size:14px;color:#000;font-weight:normal;font-style:normal;transform:scaleX(0.9933);transform-origin:0 0;">78</div>
<div class="t" style="left:69.95px;top:482.00px;font-family:'Liberation Sans', sans-serif;font-size:14px;color:#000;font-weight:normal;font-style:normal;transform:scaleX(0.8875);transform-origin:0 0;">8</div>
<div class="t" style="left:94.20px;top:483.00px;font-family:'Liberation Sans', sans-serif;font-size:13.6px;color:#000;font-weight:normal;font-style:italic;transform:scaleX(1.0569);transform-origin:0 0;">Припять</div>
<div class="t" style="left:284.99px;top:482.00px;font-family:'Liberation Sans', sans-serif;font-size:14px;color:#000;font-weight:normal;font-style:normal;transform:scaleX(1.0643);transform-origin:0 0;">18</div>
<div class="t" style="left:372.99px;top:482.00px;font-family:'Liberation Sans', sans-serif;font-size:14px;color:#000;font-weight:normal;font-style:normal;transform:scaleX(1.0643);transform-origin:0 0;">17</div>
<div class="t" style="left:461.05px;top:482.00px;font-family:'Liberation Sans', sans-serif;font-size:14px;color:#000;font-weight:normal;font-style:normal;transform:scaleX(0.9933);transform-origin:0 0;">20</div>
<div class="t" style="left:570.06px;top:482.00px;font-family:'Liberation Sans', sans-serif;font-size:14px;color:#000;font-weight:normal;font-style:normal;transform:scaleX(0.9933);transform-origin:0 0;">14</div>
<div class="t" style="left:682.29px;top:482.00px;font-family:'Liberation Sans', sans-serif;font-size:14px;color:#000;font-weight:normal;font-style:normal;transform:scaleX(1.0643);transform-origin:0 0;">17</div>
<div class="t" style="left:764.05px;top:482.00px;font-family:'Liberation Sans', sans-serif;font-size:14px;color:#000;font-weight:normal;font-style:normal;transform:scaleX(0.9933);transform-origin:0 0;">69</div>
<div class="t" style="left:69.95px;top:503.00px;font-family:'Liberation Sans', sans-serif;font-size:14px;color:#000;font-weight:normal;font-style:normal;transform:scaleX(0.8875);transform-origin:0 0;">9</div>
<div class="t" style="left:94.20px;top:504.00px;font-family:'Liberation Sans', sans-serif;font-size:13.6px;color:#000;font-weight:normal;font-style:italic;transform:scaleX(1.0855);transform-origin:0 0;">Отчуждение</div>
<div class="t" style="left:284.99px;top:503.00px;font-family:'Liberation Sans', sans-serif;font-size:14px;color:#000;font-weight:normal;font-style:normal;transform:scaleX(1.0643);transform-origin:0 0;">15</div>
<div class="t" style="left:372.99px;top:503.00px;font-family:'Liberation Sans', sans-serif;font-size:14px;color:#000;font-weight:normal;font-style:normal;transform:scaleX(1.0643);transform-origin:0 0;">17</div>
<div class="t" style="left:459.99px;top:503.00px;font-family:'Liberation Sans', sans-serif;font-size:14px;color:#000;font-weight:normal;font-style:normal;transform:scaleX(1.0643);transform-origin:0 0;">19</div>
<div class="t" style="left:571.05px;top:503.00px;font-family:'Liberation Sans', sans-serif;font-size:14px;color:#000;font-weight:normal;font-style:normal;transform:scaleX(0.9933);transform-origin:0 0;">21</div>
<div class="t" style="left:682.29px;top:503.00px;font-family:'Liberation Sans', sans-serif;font-size:14px;color:#000;font-weight:normal;font-style:normal;transform:scaleX(1.0643);transform-origin:0 0;">18</div>
<div class="t" style="left:764.05px;top:503.00px;font-family:'Liberation Sans', sans-serif;font-size:14px;color:#000;font-weight:normal;font-style:normal;transform:scaleX(0.9933);transform-origin:0 0;">72</div>
<div class="t" style="left:65.10px;top:524.00px;font-family:'Liberation Sans', sans-serif;font-size:14px;color:#000;font-weight:normal;font-style:normal;transform:scaleX(1.0500);transform-origin:0 0;">10</div>
<div class="t" style="left:94.20px;top:525.00px;font-family:'Liberation Sans', sans-serif;font-size:13.6px;color:#000;font-weight:normal;font-style:italic;transform:scaleX(1.0734);transform-origin:0 0;">Безымянная</div>
<div class="t" style="left:284.99px;top:524.00px;font-family:'Liberation Sans', sans-serif;font-size:14px;color:#000;font-weight:normal;font-style:normal;transform:scaleX(1.0643);transform-origin:0 0;">13</div>
<div class="t" style="left:372.99px;top:524.00px;font-family:'Liberation Sans', sans-serif;font-size:14px;color:#000;font-weight:normal;font-style:normal;transform:scaleX(1.0643);transform-origin:0 0;">15</div>
<div class="t" style="left:461.05px;top:524.00px;font-family:'Liberation Sans', sans-serif;font-size:14px;color:#000;font-weight:normal;font-style:normal;transform:scaleX(0.9933);transform-origin:0 0;">29</div>
<div class="t" style="left:569.99px;top:524.00px;font-family:'Liberation Sans', sans-serif;font-size:14px;color:#000;font-weight:normal;font-style:normal;transform:scaleX(1.0643);transform-origin:0 0;">16</div>
<div class="t" style="left:682.29px;top:524.00px;font-family:'Liberation Sans', sans-serif;font-size:14px;color:#000;font-weight:normal;font-style:normal;transform:scaleX(1.0643);transform-origin:0 0;">18</div>
<div class="t" style="left:764.05px;top:524.00px;font-family:'Liberation Sans', sans-serif;font-size:14px;color:#000;font-weight:normal;font-style:normal;transform:scaleX(0.9933);transform-origin:0 0;">73</div>
<div class="t" style="left:77.53px;top:546.00px;font-family:'Liberation Sans', sans-serif;font-size:13.5px;color:#000;font-weight:bold;font-style:normal;transform:scaleX(1.0692);transform-origin:0 0;">Всего травмирован</div>
<div class="t" style="left:679.80px;top:546.00px;font-family:'Liberation Sans', sans-serif;font-size:13.5px;color:#000;font-weight:bold;font-style:normal;">222</div>
<div class="t" style="left:760.25px;top:546.00px;font-family:'Liberation Sans', sans-serif;font-size:13.5px;color:#000;font-weight:bold;font-style:normal;transform:scaleX(1.0227);transform-origin:0 0;">887</div>
<div class="t" style="left:97.72px;top:567.00px;font-family:'Liberation Sans', sans-serif;font-size:13.5px;color:#000;font-weight:bold;font-style:normal;transform:scaleX(1.0837);transform-origin:0 0;">Максимальное</div>
<div class="t" style="left:683.30px;top:567.00px;font-family:'Liberation Sans', sans-serif;font-size:13.5px;color:#000;font-weight:bold;font-style:normal;">32</div>
<div class="t" style="left:759.18px;top:567.00px;font-family:'Liberation Sans', sans-serif;font-size:13.5px;color:#000;font-weight:bold;font-style:normal;transform:scaleX(1.0714);transform-origin:0 0;">129</div>
<svg style="left:0;top:0" width="891" height="849">
<rect x="56.5" y="331.5" width="188" height="208" fill="none" stroke="#fff" stroke-width="1"/>
<rect x="247.5" y="332.5" width="394" height="207" fill="none" stroke="#fff" stroke-width="1"/>
<rect x="247.5" y="289.5" width="394" height="40" fill="none" stroke="#fff" stroke-width="1"/>
<rect x="55" y="330" width="191" height="211" fill="none" stroke="#7d4fbd" stroke-width="2"/>
<rect x="246" y="331" width="397" height="210" fill="none" stroke="#2f66c4" stroke-width="2"/>
<rect x="246" y="288" width="397" height="43" fill="none" stroke="#c42b3a" stroke-width="2"/>
<rect x="52.5" y="327.5" width="6" height="6" fill="#7d4fbd" stroke="#fff" stroke-width="1"/>
<rect x="52.5" y="537.5" width="6" height="6" fill="#7d4fbd" stroke="#fff" stroke-width="1"/>
<rect x="243.5" y="285.5" width="6" height="6" fill="#c42b3a" stroke="#fff" stroke-width="1"/>
<rect x="639.5" y="285.5" width="6" height="6" fill="#c42b3a" stroke="#fff" stroke-width="1"/>
<rect x="243.5" y="327.5" width="6" height="6" fill="#c42b3a" stroke="#fff" stroke-width="1"/>
<rect x="639.5" y="327.5" width="6" height="6" fill="#c42b3a" stroke="#fff" stroke-width="1"/>
</svg>
<svg style="left:0;top:0" width="891" height="849" viewBox="0 0 891 849">
<rect x="215.0" y="420.0" width="480.5" height="338.5" fill="#fff"/>
<rect x="216.5" y="421.5" width="479.0" height="337.0" fill="#fff" stroke="#a0a0a0" stroke-width="1.2"/>
<path d="M253.6 560.4H680.4" stroke="#d9d9d9" stroke-width="1"/>
<path d="M253.6 547.4H680.4" stroke="#d9d9d9" stroke-width="1"/>
<path d="M253.6 534.4H680.4" stroke="#d9d9d9" stroke-width="1"/>
<path d="M253.6 521.4H680.4" stroke="#d9d9d9" stroke-width="1"/>
<path d="M253.6 508.4H680.4" stroke="#d9d9d9" stroke-width="1"/>
<path d="M253.6 495.4H680.4" stroke="#d9d9d9" stroke-width="1"/>
<path d="M253.6 482.4H680.4" stroke="#d9d9d9" stroke-width="1"/>
<path d="M253.6 469.4H680.4" stroke="#d9d9d9" stroke-width="1"/>
<path d="M253.6 560.4V631M253.6 633V655" stroke="#d9d9d9" stroke-width="1"/>
<path d="M296.3 560.4V631M296.3 633V655" stroke="#d9d9d9" stroke-width="1"/>
<path d="M339.0 560.4V631M339.0 633V655" stroke="#d9d9d9" stroke-width="1"/>
<path d="M381.6 560.4V631M381.6 633V655" stroke="#d9d9d9" stroke-width="1"/>
<path d="M424.3 560.4V631M424.3 633V655" stroke="#d9d9d9" stroke-width="1"/>
<path d="M467.0 560.4V631M467.0 633V655" stroke="#d9d9d9" stroke-width="1"/>
<path d="M509.7 560.4V631M509.7 633V655" stroke="#d9d9d9" stroke-width="1"/>
<path d="M552.4 560.4V631M552.4 633V655" stroke="#d9d9d9" stroke-width="1"/>
<path d="M595.0 560.4V631M595.0 633V655" stroke="#d9d9d9" stroke-width="1"/>
<path d="M637.7 560.4V631M637.7 633V655" stroke="#d9d9d9" stroke-width="1"/>
<path d="M680.4 560.4V631M680.4 633V655" stroke="#d9d9d9" stroke-width="1"/>
<polyline points="274.9,540.2 317.6,547.4 360.3,550.6 403.0,537.6 445.7,544.1 488.3,550.0 531.0,547.4 573.7,548.7 616.4,550.6 659.1,551.9" fill="none" stroke="#5b9bd5" stroke-width="2.9" stroke-linejoin="round" stroke-linecap="round"/>
<polyline points="274.9,523.4 317.6,527.9 360.3,534.4 403.0,512.3 445.7,534.4 488.3,537.6 531.0,535.7 573.7,537.6 616.4,539.6 659.1,542.2" fill="none" stroke="#ed7d31" stroke-width="2.9" stroke-linejoin="round" stroke-linecap="round"/>
<polyline points="274.9,515.5 317.6,518.1 360.3,521.4 403.0,496.0 445.7,520.1 488.3,525.3 531.0,524.0 573.7,524.6 616.4,527.2 659.1,523.4" fill="none" stroke="#a5a5a5" stroke-width="2.9" stroke-linejoin="round" stroke-linecap="round"/>
<polyline points="274.9,489.5 317.6,495.4 360.3,497.3 403.0,476.5 445.7,505.1 488.3,511.6 531.0,509.7 573.7,515.5 616.4,513.6 659.1,512.9" fill="none" stroke="#ffc000" stroke-width="2.9" stroke-linejoin="round" stroke-linecap="round"/>
<path d="M326 673.7H350" stroke="#ffc000" stroke-width="3.2" stroke-linecap="round"/>
<path d="M326 696.5H350" stroke="#a5a5a5" stroke-width="3.2" stroke-linecap="round"/>
<path d="M326 718.5H350" stroke="#ed7d31" stroke-width="3.2" stroke-linecap="round"/>
<path d="M326 741.4H350" stroke="#5b9bd5" stroke-width="3.2" stroke-linecap="round"/>
</svg>
<div class="t" style="left:369.70px;top:435.00px;font-family:'Liberation Sans', sans-serif;font-size:15.6px;color:#595959;font-weight:normal;font-style:normal;transform:scaleX(1.0961);transform-origin:0 0;">Название диаграммы</div>
<div class="t" style="left:237.05px;top:554.00px;font-family:'Liberation Sans', sans-serif;font-size:10.7px;color:#595959;font-weight:normal;font-style:normal;transform:scaleX(0.8250);transform-origin:0 0;">0</div>
<div class="t" style="left:231.20px;top:541.00px;font-family:'Liberation Sans', sans-serif;font-size:10.7px;color:#595959;font-weight:normal;font-style:normal;transform:scaleX(0.9000);transform-origin:0 0;">20</div>
<div class="t" style="left:231.20px;top:528.00px;font-family:'Liberation Sans', sans-serif;font-size:10.7px;color:#595959;font-weight:normal;font-style:normal;transform:scaleX(0.9000);transform-origin:0 0;">40</div>
<div class="t" style="left:231.20px;top:515.00px;font-family:'Liberation Sans', sans-serif;font-size:10.7px;color:#595959;font-weight:normal;font-style:normal;transform:scaleX(0.9000);transform-origin:0 0;">60</div>
<div class="t" style="left:231.20px;top:502.00px;font-family:'Liberation Sans', sans-serif;font-size:10.7px;color:#595959;font-weight:normal;font-style:normal;transform:scaleX(0.9000);transform-origin:0 0;">80</div>
<div class="t" style="left:224.37px;top:489.00px;font-family:'Liberation Sans', sans-serif;font-size:10.7px;color:#595959;font-weight:normal;font-style:normal;transform:scaleX(0.9794);transform-origin:0 0;">100</div>
<div class="t" style="left:224.37px;top:476.00px;font-family:'Liberation Sans', sans-serif;font-size:10.7px;color:#595959;font-weight:normal;font-style:normal;transform:scaleX(0.9794);transform-origin:0 0;">120</div>
<div class="t" style="left:224.37px;top:463.00px;font-family:'Liberation Sans', sans-serif;font-size:10.7px;color:#595959;font-weight:normal;font-style:normal;transform:scaleX(0.9794);transform-origin:0 0;">140</div>
<div class="t" style="left:271.44px;top:642.00px;font-family:'Liberation Sans', sans-serif;font-size:10.7px;color:#595959;font-weight:normal;font-style:normal;">1</div>
<div class="t" style="left:314.62px;top:642.00px;font-family:'Liberation Sans', sans-serif;font-size:10.7px;color:#595959;font-weight:normal;font-style:normal;">2</div>
<div class="t" style="left:357.30px;top:642.00px;font-family:'Liberation Sans', sans-serif;font-size:10.7px;color:#595959;font-weight:normal;font-style:normal;">3</div>
<div class="t" style="left:399.98px;top:642.00px;font-family:'Liberation Sans', sans-serif;font-size:10.7px;color:#595959;font-weight:normal;font-style:normal;">4</div>
<div class="t" style="left:442.66px;top:642.00px;font-family:'Liberation Sans', sans-serif;font-size:10.7px;color:#595959;font-weight:normal;font-style:normal;">5</div>
<div class="t" style="left:485.34px;top:642.00px;font-family:'Liberation Sans', sans-serif;font-size:10.7px;color:#595959;font-weight:normal;font-style:normal;">6</div>
<div class="t" style="left:528.02px;top:642.00px;font-family:'Liberation Sans', sans-serif;font-size:10.7px;color:#595959;font-weight:normal;font-style:normal;">7</div>
<div class="t" style="left:570.70px;top:642.00px;font-family:'Liberation Sans', sans-serif;font-size:10.7px;color:#595959;font-weight:normal;font-style:normal;">8</div>
<div class="t" style="left:613.38px;top:642.00px;font-family:'Liberation Sans', sans-serif;font-size:10.7px;color:#595959;font-weight:normal;font-style:normal;">9</div>
<div class="t" style="left:652.56px;top:642.00px;font-family:'Liberation Sans', sans-serif;font-size:10.7px;color:#595959;font-weight:normal;font-style:normal;">10</div>
<div class="t" style="left:274.9px;top:567.3px;font-family:'Liberation Sans', sans-serif;font-size:11px;color:#595959;transform-origin:0 0;transform:rotate(-90deg) scaleX(0.96) translate(-100%,-50%);">Глубокая</div>
<div class="t" style="left:317.6px;top:567.3px;font-family:'Liberation Sans', sans-serif;font-size:11px;color:#595959;transform-origin:0 0;transform:rotate(-90deg) scaleX(0.96) translate(-100%,-50%);">Длинная</div>
<div class="t" style="left:360.3px;top:567.3px;font-family:'Liberation Sans', sans-serif;font-size:11px;color:#595959;transform-origin:0 0;transform:rotate(-90deg) scaleX(0.96) translate(-100%,-50%);">Короткая</div>
<div class="t" style="left:403.0px;top:567.3px;font-family:'Liberation Sans', sans-serif;font-size:11px;color:#595959;transform-origin:0 0;transform:rotate(-90deg) scaleX(0.96) translate(-100%,-50%);">Дум</div>
<div class="t" style="left:445.7px;top:567.3px;font-family:'Liberation Sans', sans-serif;font-size:11px;color:#595959;transform-origin:0 0;transform:rotate(-90deg) scaleX(0.96) translate(-100%,-50%);">Овальная</div>
<div class="t" style="left:488.3px;top:567.3px;font-family:'Liberation Sans', sans-serif;font-size:11px;color:#595959;transform-origin:0 0;transform:rotate(-90deg) scaleX(0.96) translate(-100%,-50%);">Квадратная</div>
<div class="t" style="left:531.0px;top:567.3px;font-family:'Liberation Sans', sans-serif;font-size:11px;color:#595959;transform-origin:0 0;transform:rotate(-90deg) scaleX(0.96) translate(-100%,-50%);">Странная</div>
<div class="t" style="left:573.7px;top:567.3px;font-family:'Liberation Sans', sans-serif;font-size:11px;color:#595959;transform-origin:0 0;transform:rotate(-90deg) scaleX(0.96) translate(-100%,-50%);">Припять</div>
<div class="t" style="left:616.4px;top:567.3px;font-family:'Liberation Sans', sans-serif;font-size:11px;color:#595959;transform-origin:0 0;transform:rotate(-90deg) scaleX(0.96) translate(-100%,-50%);">Отчуждение</div>
<div class="t" style="left:659.1px;top:567.3px;font-family:'Liberation Sans', sans-serif;font-size:11px;color:#595959;transform-origin:0 0;transform:rotate(-90deg) scaleX(0.96) translate(-100%,-50%);">Безымянная</div>
<div class="t" style="left:352.81px;top:668.00px;font-family:'Liberation Sans', sans-serif;font-size:11.2px;color:#595959;font-weight:normal;font-style:normal;transform:scaleX(0.9895);transform-origin:0 0;">Количество травмированных работников 4 кв.</div>
<div class="t" style="left:352.81px;top:691.00px;font-family:'Liberation Sans', sans-serif;font-size:11.2px;color:#595959;font-weight:normal;font-style:normal;transform:scaleX(0.9895);transform-origin:0 0;">Количество травмированных работников 3 кв.</div>
<div class="t" style="left:352.81px;top:713.00px;font-family:'Liberation Sans', sans-serif;font-size:11.2px;color:#595959;font-weight:normal;font-style:normal;transform:scaleX(0.9895);transform-origin:0 0;">Количество травмированных работников 2 кв.</div>
<div class="t" style="left:352.81px;top:736.00px;font-family:'Liberation Sans', sans-serif;font-size:11.2px;color:#595959;font-weight:normal;font-style:normal;transform:scaleX(0.9895);transform-origin:0 0;">Количество травмированных работников 1 кв.</div>
<svg style="left:0;top:0" width="891" height="849"><circle cx="216.5" cy="421.5" r="4.8" fill="#fff" stroke="#8c8c8c" stroke-width="1.6"/><circle cx="456.0" cy="421.5" r="4.8" fill="#fff" stroke="#8c8c8c" stroke-width="1.6"/><circle cx="695.5" cy="421.5" r="4.8" fill="#fff" stroke="#8c8c8c" stroke-width="1.6"/><circle cx="216.5" cy="590.0" r="4.8" fill="#fff" stroke="#8c8c8c" stroke-width="1.6"/><circle cx="695.5" cy="590.0" r="4.8" fill="#fff" stroke="#8c8c8c" stroke-width="1.6"/><circle cx="216.5" cy="758.5" r="4.8" fill="#fff" stroke="#8c8c8c" stroke-width="1.6"/><circle cx="456.0" cy="758.5" r="4.8" fill="#fff" stroke="#8c8c8c" stroke-width="1.6"/><circle cx="695.5" cy="758.5" r="4.8" fill="#fff" stroke="#8c8c8c" stroke-width="1.6"/></svg>
<div class="a" style="left:709px;top:420px;width:28px;height:28px;background:#fff;border:1px solid #c2c2c2;"></div>
<div class="a" style="left:709px;top:458px;width:28px;height:28px;background:#fff;border:1px solid #c2c2c2;"></div>
<div class="a" style="left:709px;top:496px;width:28px;height:28px;background:#fff;border:1px solid #c2c2c2;"></div>
<svg style="left:0;top:0" width="891" height="849">
<path d="M722.8 427v14.2M715.7 434.1h14.2" stroke="#5f9f83" stroke-width="3.8"/>
<path d="M732 463l-6.5 8.2 2.3 2 5-5.5z" fill="#666"/>
<path d="M724.5 471.5c-2.8-1.2-5.5 0-6.5 2.5c-0.8 2-2 3.8-3.5 4.8c3.5 0.5 8-0.5 9.8-3.3l1.5-2z" fill="#3f7fc4"/>
<path d="M720.5 473.5c1.5-0.8 3.2 0 3.5 1.2" fill="none" stroke="#fff" stroke-width="0.9"/>
<path d="M714.5 502.5h18l-7 7.5h-4z" fill="#777"/>
<path d="M717.5 503.5l5.5 6" fill="none" stroke="#fff" stroke-width="1"/>
<path d="M721.5 510v7.5h3v-7.5" fill="none" stroke="#777" stroke-width="1.3"/>
</svg>
<div class="a" style="left:869px;top:199px;width:20px;height:599px;background:#e6e6e6;"></div>
<div class="a" style="left:872px;top:201px;width:15px;height:15px;background:#fff;border:1px solid #bdbdbd;"></div>
<div class="a" style="left:872px;top:216px;width:15px;height:546px;background:#fff;border:1px solid #b3b3b3;"></div>
<div class="a" style="left:872px;top:762px;width:15px;height:22px;background:#dadada;"></div>
<div class="a" style="left:872px;top:784px;width:15px;height:14px;background:#fff;border:1px solid #bdbdbd;"></div>
<svg style="left:0;top:0" width="891" height="849"><path d="M875.5 210.5h8l-4-4.5z" fill="#666"/><path d="M875.5 788.5h8l-4 4.5z" fill="#666"/></svg>
<div class="a" style="left:0px;top:798px;width:891px;height:28px;background:#e6e6e6;"></div>
<div class="a" style="left:0px;top:798px;width:868px;height:1px;background:#c6c6c6;"></div>
<div class="a" style="left:101px;top:798px;width:61px;height:24px;background:#fff;border-left:1px solid #b9b9b9;border-right:1px solid #b9b9b9;"></div>
<div class="a" style="left:101px;top:821px;width:61px;height:2px;background:#217346;"></div>
<div class="t" style="left:113.00px;top:805.00px;font-family:'Liberation Sans', sans-serif;font-size:13px;color:#217346;font-weight:bold;font-style:normal;transform:scaleX(0.9079);transform-origin:0 0;">Лист1</div>
<div class="t" style="left:174.20px;top:806.00px;font-family:'Liberation Sans', sans-serif;font-size:12.8px;color:#444;font-weight:normal;font-style:normal;transform:scaleX(0.9486);transform-origin:0 0;">Лист3</div>
<div class="a" style="left:221px;top:803px;width:1px;height:17px;background:#b5b5b5;"></div>
<div class="t" style="left:234.20px;top:806.00px;font-family:'Liberation Sans', sans-serif;font-size:12.8px;color:#444;font-weight:normal;font-style:normal;transform:scaleX(0.9343);transform-origin:0 0;">Лист2</div>
<div class="a" style="left:280px;top:803px;width:1px;height:17px;background:#b5b5b5;"></div>
<svg style="left:0;top:798px" width="891" height="28" viewBox="0 798 891 28">
<circle cx="321.7" cy="811.9" r="6.7" fill="none" stroke="#666" stroke-width="1.2"/>
<path d="M321.7 808v7.8M317.8 811.9h7.8" stroke="#666" stroke-width="1.5"/>
<circle cx="534.7" cy="807.5" r="0.9" fill="#999"/><circle cx="534.7" cy="812" r="0.9" fill="#999"/><circle cx="534.7" cy="816.5" r="0.9" fill="#999"/>
</svg>
<div class="a" style="left:551px;top:805.5px;width:15px;height:14px;background:#fff;border:1px solid #bdbdbd;"></div>
<div class="a" style="left:565px;top:805.5px;width:257px;height:14px;background:#fff;border:1px solid #b3b3b3;"></div>
<div class="a" style="left:821px;top:805.5px;width:33px;height:14px;background:#dadada;"></div>
<div class="a" style="left:854px;top:805.5px;width:15px;height:14px;background:#fff;border:1px solid #bdbdbd;"></div>
<svg style="left:0;top:0" width="891" height="849"><path d="M560.5 808.5v7l-4-3.5z" fill="#666"/><path d="M859.5 808.5v7l4-3.5z" fill="#666"/></svg>
<div class="a" style="left:0px;top:826px;width:891px;height:21px;background:#f0f0f0;"></div>
<div class="a" style="left:0px;top:826px;width:891px;height:1px;background:#d0d0d0;"></div>
<div class="t" style="left:7.64px;top:832.00px;font-family:'Liberation Sans', sans-serif;font-size:10.8px;color:#444;font-weight:normal;font-style:normal;transform:scaleX(1.1125);transform-origin:0 0;">Готово</div>
<svg style="left:0;top:826px" width="891" height="21" viewBox="0 826 891 21">
<circle cx="68" cy="832.9" r="2.9" fill="#777"/>
<rect x="72.2" y="831" width="5.8" height="2.9" fill="#777"/>
<path d="M66.5 837v5.3h11v-11.3" fill="none" stroke="#777" stroke-width="1.1"/>
<path d="M71 836.5h2M74 836.5h2M68 838.5h2M71 838.5h2M74 838.5h2M68 840.5h2M71 840.5h2M74 840.5h2" stroke="#777" stroke-width="1"/>
</svg>
<div class="t" style="left:285.40px;top:831.00px;font-family:'Liberation Sans', sans-serif;font-size:10.8px;color:#444;font-weight:normal;font-style:normal;transform:scaleX(0.9974);transform-origin:0 0;">Среднее: 18,84</div>
<div class="t" style="left:414.55px;top:831.00px;font-family:'Liberation Sans', sans-serif;font-size:10.8px;color:#444;font-weight:normal;font-style:normal;transform:scaleX(1.0507);transform-origin:0 0;">Количество: 67</div>
<div class="t" style="left:511.90px;top:831.00px;font-family:'Liberation Sans', sans-serif;font-size:10.8px;color:#444;font-weight:normal;font-style:normal;transform:scaleX(0.9707);transform-origin:0 0;">Сумма: 942</div>
<div class="a" style="left:588px;top:826px;width:37px;height:21px;background:#d2d2d2;"></div>
<svg style="left:0;top:826px" width="891" height="21" viewBox="0 826 891 21">
<g fill="none" stroke="#666" stroke-width="1">
<path d="M599.5 830.5h12v12h-12zM603.5 830.5v12M607.5 830.5v12M599.5 834.5h12M599.5 838.5h12" stroke="#707070" stroke-width="1.3"/>
<path d="M637.5 830.5h13v12h-13zM640.5 832.5h7v8h-7zM642 834.5h4M642 836.5h4M642 838.5h4" stroke="#707070" stroke-width="1.2"/>
<path d="M675.5 830.5h13v12h-13zM683.5 830.5v6.5h-8M679.5 830.5v6.5" stroke="#707070" stroke-width="1.2"/>
<path d="M716 836.5h100" stroke="#aaa"/>
</g>
<path d="M706 836h6v1.6h-6z" fill="#555"/>
<path d="M819.5 836h9v1.6h-9zM823.2 832.3h1.6v9h-1.6z" fill="#555"/>
<rect x="764.5" y="831" width="3.5" height="11" fill="#666"/>
</svg>
<div class="t" style="left:843.52px;top:831.00px;font-family:'Liberation Sans', sans-serif;font-size:10.8px;color:#444;font-weight:normal;font-style:normal;transform:scaleX(0.9815);transform-origin:0 0;">100%</div>
<div class="a" style="left:0px;top:847px;width:891px;height:1px;background:#fff;"></div>
<div class="a" style="left:0px;top:848px;width:891px;height:1px;background:#217346;"></div>
<div class="a" style="left:1px;top:60px;width:1px;height:788px;background:#fff;"></div>
<div class="a" style="left:0px;top:60px;width:1px;height:789px;background:#217346;"></div>
<div class="a" style="left:889px;top:60px;width:1px;height:788px;background:#fff;"></div>
<div class="a" style="left:890px;top:60px;width:1px;height:789px;background:#217346;"></div>
<svg style="left:0;top:0" width="891" height="160">
<!-- switch row/col -->
<rect x="582.5" y="68.5" width="28" height="25" fill="#fff" stroke="#808080"/>
<rect x="582" y="68" width="29" height="4.8" fill="#7a7a7a"/>
<path d="M583 77.5h27M583 82.5h27M583 87.5h27M589.5 73v20M596.5 73v20M603.5 73v20" stroke="#9a9a9a" stroke-width="1"/>
<path d="M592.5 77.5h11v10h-11zM596.5 82.5h7M596.5 82.5v5" fill="#fff" stroke="#e8772b" stroke-width="1.3"/>
<path d="M597 76.5c-5.5 0-9 3.5-9 10" fill="none" stroke="#fff" stroke-width="4.5"/>
<path d="M597 76.5c-5.5 0-9 3.5-9 10" fill="none" stroke="#3a78b8" stroke-width="2.2"/>
<path d="M596.5 72.5l5 4-5 4z" fill="#3a78b8"/>
<path d="M584 85.5l4 5 4-5z" fill="#3a78b8"/>
<!-- select data -->
<rect x="633.5" y="69.5" width="28" height="24" fill="#fff" stroke="#808080"/>
<rect x="633" y="69" width="29" height="4.6" fill="#7a7a7a"/>
<path d="M634 78.5h27M634 83.5h27M634 88.5h27M640.5 74v19M647.5 74v19M654.5 74v19" stroke="#9a9a9a" stroke-width="1"/>
<path d="M654.5 78.5h-14v10h14" fill="none" stroke="#e8772b" stroke-width="1.3"/>
<rect x="647" y="82" width="17" height="16" fill="#fff" stroke="#808080" stroke-width="1.4"/>
<path d="M650.5 96.5v-7h3v7M653.5 96.5v-10h3v10M656.5 96.5v-7h3v7M659.5 96.5v-5h2.5v5" fill="#d0d0d0" stroke="#808080" stroke-width="1"/>
<!-- chart type -->
<rect x="711" y="77" width="7" height="18" fill="#4a80bd"/>
<rect x="719.2" y="69" width="6.7" height="26" fill="#e9c57c"/>
<rect x="727" y="73.8" width="6.8" height="21.2" fill="#7a7a7a"/>
<!-- move chart -->
<path d="M797.5 69.5h27v20.5h-15.5l-3 3h-8.5z" fill="#fff" stroke="#808080" stroke-width="1.2"/>
<path d="M802.5 86.5v-8.5h3.5v8.5M806.5 86.5v-14h4v14M812.5 86.5v-10h4v10M816.5 86.5v-7h4v7" fill="#d0d0d0" stroke="#808080" stroke-width="1"/>
<path d="M812 90l-3 3" stroke="#808080" stroke-width="1.2"/>
<!-- collapse caret -->
<path d="M871.5 147.5l4-4 4 4" fill="none" stroke="#555" stroke-width="1.6"/>
</svg>
<svg style="left:0;top:0" width="891" height="160">
<rect x="279.5" y="66.5" width="281" height="59" fill="#fff" stroke="#c6c6c6"/>
<rect x="280" y="67" width="88" height="57" fill="#c6c6c6"/>
<rect x="283.9" y="71.9" width="80.2" height="48.2" fill="#fff"/><rect x="310.4" y="76.0" width="28.1" height="1.0" fill="#aaa"/><rect x="285.9" y="81.1" width="3.2" height="0.8" fill="#aaa"/><rect x="285.9" y="83.2" width="3.2" height="0.8" fill="#aaa"/><rect x="285.9" y="85.4" width="3.2" height="0.8" fill="#aaa"/><rect x="285.9" y="87.6" width="3.2" height="0.8" fill="#aaa"/><path d="M291.1 81.5H361.7" stroke="#eee" stroke-width="0.6"/><path d="M291.1 83.7H361.7" stroke="#eee" stroke-width="0.6"/><path d="M291.1 85.9H361.7" stroke="#eee" stroke-width="0.6"/><path d="M291.1 88.0H361.7" stroke="#eee" stroke-width="0.6"/><polyline points="294.6,85.6 301.7,86.2 308.8,86.5 315.8,85.4 322.9,86.0 329.9,86.5 337.0,86.2 344.0,86.3 351.1,86.5 358.2,86.6" fill="none" stroke="#5b9bd5" stroke-width="1.0" opacity="0.75"/><polyline points="294.6,84.2 301.7,84.6 308.8,85.2 315.8,83.3 322.9,85.2 329.9,85.4 337.0,85.3 344.0,85.4 351.1,85.6 358.2,85.8" fill="none" stroke="#ed7d31" stroke-width="1.0" opacity="0.75"/><polyline points="294.6,83.6 301.7,83.8 308.8,84.1 315.8,82.0 322.9,84.0 329.9,84.4 337.0,84.3 344.0,84.3 351.1,84.6 358.2,84.2" fill="none" stroke="#a5a5a5" stroke-width="1.0" opacity="0.75"/><polyline points="294.6,81.4 301.7,81.9 308.8,82.1 315.8,80.3 322.9,82.7 329.9,83.3 337.0,83.1 344.0,83.6 351.1,83.4 358.2,83.4" fill="none" stroke="#ffc000" stroke-width="1.0" opacity="0.75"/><path d="M291.1 87.8V103.7" stroke="#ddd" stroke-width="0.6"/><path d="M298.2 87.8V103.7" stroke="#ddd" stroke-width="0.6"/><path d="M305.2 87.8V103.7" stroke="#ddd" stroke-width="0.6"/><path d="M312.3 87.8V103.7" stroke="#ddd" stroke-width="0.6"/><path d="M319.3 87.8V103.7" stroke="#ddd" stroke-width="0.6"/><path d="M326.4 87.8V103.7" stroke="#ddd" stroke-width="0.6"/><path d="M333.5 87.8V103.7" stroke="#ddd" stroke-width="0.6"/><path d="M340.5 87.8V103.7" stroke="#ddd" stroke-width="0.6"/><path d="M347.6 87.8V103.7" stroke="#ddd" stroke-width="0.6"/><path d="M354.6 87.8V103.7" stroke="#ddd" stroke-width="0.6"/><path d="M361.7 87.8V103.7" stroke="#ddd" stroke-width="0.6"/><rect x="294.1" y="89.3" width="1" height="5.8" fill="#c4c4c4"/><rect x="294.1" y="101.3" width="1" height="1" fill="#aaa"/><rect x="301.2" y="89.3" width="1" height="8.7" fill="#c4c4c4"/><rect x="301.2" y="101.3" width="1" height="1" fill="#aaa"/><rect x="308.3" y="89.3" width="1" height="11.6" fill="#c4c4c4"/><rect x="308.3" y="101.3" width="1" height="1" fill="#aaa"/><rect x="315.3" y="89.3" width="1" height="5.8" fill="#c4c4c4"/><rect x="315.3" y="101.3" width="1" height="1" fill="#aaa"/><rect x="322.4" y="89.3" width="1" height="8.7" fill="#c4c4c4"/><rect x="322.4" y="101.3" width="1" height="1" fill="#aaa"/><rect x="329.4" y="89.3" width="1" height="11.6" fill="#c4c4c4"/><rect x="329.4" y="101.3" width="1" height="1" fill="#aaa"/><rect x="336.5" y="89.3" width="1" height="5.8" fill="#c4c4c4"/><rect x="336.5" y="101.3" width="1" height="1" fill="#aaa"/><rect x="343.5" y="89.3" width="1" height="8.7" fill="#c4c4c4"/><rect x="343.5" y="101.3" width="1" height="1" fill="#aaa"/><rect x="350.6" y="89.3" width="1" height="11.6" fill="#c4c4c4"/><rect x="350.6" y="101.3" width="1" height="1" fill="#aaa"/><rect x="357.7" y="89.3" width="1" height="5.8" fill="#c4c4c4"/><rect x="357.7" y="101.3" width="1" height="1" fill="#aaa"/><path d="M300.7 105.6H305.6" stroke="#ffc000" stroke-width="1.2"/><path d="M306.4 105.6H345.7" stroke="#b8b8b8" stroke-width="0.7"/><path d="M300.7 109.5H305.6" stroke="#a5a5a5" stroke-width="1.2"/><path d="M306.4 109.5H345.7" stroke="#b8b8b8" stroke-width="0.7"/><path d="M300.7 113.4H305.6" stroke="#ed7d31" stroke-width="1.2"/><path d="M306.4 113.4H345.7" stroke="#b8b8b8" stroke-width="0.7"/><path d="M300.7 117.2H305.6" stroke="#5b9bd5" stroke-width="1.2"/><path d="M306.4 117.2H345.7" stroke="#b8b8b8" stroke-width="0.7"/>
<defs><radialGradient id="gg" cx="50%" cy="20%" r="80%"><stop offset="0" stop-color="#fafafa"/><stop offset="1" stop-color="#b5b5b5"/></radialGradient></defs><rect x="372.2" y="72.1" width="79.7" height="47.7" fill="url(#gg)"/><rect x="398.5" y="76.2" width="27.9" height="1.6" fill="#444"/><polyline points="382.9,85.7 389.9,86.3 396.9,86.6 403.9,85.5 410.9,86.0 417.9,86.5 425.0,86.3 432.0,86.4 439.0,86.6 446.0,86.7" fill="none" stroke="#5b9bd5" stroke-width="1.0" opacity="0.75"/><polyline points="382.9,84.3 389.9,84.7 396.9,85.2 403.9,83.4 410.9,85.2 417.9,85.5 425.0,85.3 432.0,85.5 439.0,85.6 446.0,85.9" fill="none" stroke="#ed7d31" stroke-width="1.0" opacity="0.75"/><polyline points="382.9,83.7 389.9,83.9 396.9,84.1 403.9,82.1 410.9,84.0 417.9,84.5 425.0,84.4 432.0,84.4 439.0,84.6 446.0,84.3" fill="none" stroke="#a5a5a5" stroke-width="1.0" opacity="0.75"/><polyline points="382.9,81.5 389.9,82.0 396.9,82.2 403.9,80.4 410.9,82.8 417.9,83.3 425.0,83.2 432.0,83.7 439.0,83.5 446.0,83.4" fill="none" stroke="#ffc000" stroke-width="1.0" opacity="0.75"/><circle cx="382.9" cy="81.5" r="1.8" fill="#ffe08a" stroke="#f2b600" stroke-width="0.6"/><rect x="380.0" y="88.3" width="5.8" height="14.8" fill="#e6e6e6" opacity="0.8"/><circle cx="389.9" cy="82.0" r="1.8" fill="#ffe08a" stroke="#f2b600" stroke-width="0.6"/><rect x="387.0" y="88.3" width="5.8" height="14.8" fill="#e6e6e6" opacity="0.8"/><circle cx="396.9" cy="82.2" r="1.8" fill="#ffe08a" stroke="#f2b600" stroke-width="0.6"/><rect x="394.0" y="88.3" width="5.8" height="14.8" fill="#e6e6e6" opacity="0.8"/><circle cx="403.9" cy="80.4" r="1.8" fill="#ffe08a" stroke="#f2b600" stroke-width="0.6"/><rect x="401.0" y="88.3" width="5.8" height="14.8" fill="#e6e6e6" opacity="0.8"/><circle cx="410.9" cy="82.8" r="1.8" fill="#ffe08a" stroke="#f2b600" stroke-width="0.6"/><rect x="408.0" y="88.3" width="5.8" height="14.8" fill="#e6e6e6" opacity="0.8"/><circle cx="417.9" cy="83.3" r="1.8" fill="#ffe08a" stroke="#f2b600" stroke-width="0.6"/><rect x="415.0" y="88.3" width="5.8" height="14.8" fill="#e6e6e6" opacity="0.8"/><circle cx="425.0" cy="83.2" r="1.8" fill="#ffe08a" stroke="#f2b600" stroke-width="0.6"/><rect x="422.1" y="88.3" width="5.8" height="14.8" fill="#e6e6e6" opacity="0.8"/><circle cx="432.0" cy="83.7" r="1.8" fill="#ffe08a" stroke="#f2b600" stroke-width="0.6"/><rect x="429.1" y="88.3" width="5.8" height="14.8" fill="#e6e6e6" opacity="0.8"/><circle cx="439.0" cy="83.5" r="1.8" fill="#ffe08a" stroke="#f2b600" stroke-width="0.6"/><rect x="436.1" y="88.3" width="5.8" height="14.8" fill="#e6e6e6" opacity="0.8"/><circle cx="446.0" cy="83.4" r="1.8" fill="#ffe08a" stroke="#f2b600" stroke-width="0.6"/><rect x="443.1" y="88.3" width="5.8" height="14.8" fill="#e6e6e6" opacity="0.8"/><path d="M379.4 87.8V103.6" stroke="#ddd" stroke-width="0.6"/><path d="M386.4 87.8V103.6" stroke="#ddd" stroke-width="0.6"/><path d="M393.4 87.8V103.6" stroke="#ddd" stroke-width="0.6"/><path d="M400.4 87.8V103.6" stroke="#ddd" stroke-width="0.6"/><path d="M407.4 87.8V103.6" stroke="#ddd" stroke-width="0.6"/><path d="M414.4 87.8V103.6" stroke="#ddd" stroke-width="0.6"/><path d="M421.5 87.8V103.6" stroke="#ddd" stroke-width="0.6"/><path d="M428.5 87.8V103.6" stroke="#ddd" stroke-width="0.6"/><path d="M435.5 87.8V103.6" stroke="#ddd" stroke-width="0.6"/><path d="M442.5 87.8V103.6" stroke="#ddd" stroke-width="0.6"/><path d="M449.5 87.8V103.6" stroke="#ddd" stroke-width="0.6"/><rect x="382.4" y="89.3" width="1" height="5.7" fill="#c4c4c4"/><rect x="382.4" y="101.2" width="1" height="1" fill="#aaa"/><rect x="389.4" y="89.3" width="1" height="8.6" fill="#c4c4c4"/><rect x="389.4" y="101.2" width="1" height="1" fill="#aaa"/><rect x="396.4" y="89.3" width="1" height="11.4" fill="#c4c4c4"/><rect x="396.4" y="101.2" width="1" height="1" fill="#aaa"/><rect x="403.4" y="89.3" width="1" height="5.7" fill="#c4c4c4"/><rect x="403.4" y="101.2" width="1" height="1" fill="#aaa"/><rect x="410.4" y="89.3" width="1" height="8.6" fill="#c4c4c4"/><rect x="410.4" y="101.2" width="1" height="1" fill="#aaa"/><rect x="417.4" y="89.3" width="1" height="11.4" fill="#c4c4c4"/><rect x="417.4" y="101.2" width="1" height="1" fill="#aaa"/><rect x="424.5" y="89.3" width="1" height="5.7" fill="#c4c4c4"/><rect x="424.5" y="101.2" width="1" height="1" fill="#aaa"/><rect x="431.5" y="89.3" width="1" height="8.6" fill="#c4c4c4"/><rect x="431.5" y="101.2" width="1" height="1" fill="#aaa"/><rect x="438.5" y="89.3" width="1" height="11.4" fill="#c4c4c4"/><rect x="438.5" y="101.2" width="1" height="1" fill="#aaa"/><rect x="445.5" y="89.3" width="1" height="5.7" fill="#c4c4c4"/><rect x="445.5" y="101.2" width="1" height="1" fill="#aaa"/><path d="M388.9 105.5H393.7" stroke="#ffc000" stroke-width="1.2"/><path d="M394.5 105.5H433.6" stroke="#b8b8b8" stroke-width="0.7"/><path d="M388.9 109.3H393.7" stroke="#a5a5a5" stroke-width="1.2"/><path d="M394.5 109.3H433.6" stroke="#b8b8b8" stroke-width="0.7"/><path d="M388.9 113.1H393.7" stroke="#ed7d31" stroke-width="1.2"/><path d="M394.5 113.1H433.6" stroke="#b8b8b8" stroke-width="0.7"/><path d="M388.9 116.9H393.7" stroke="#5b9bd5" stroke-width="1.2"/><path d="M394.5 116.9H433.6" stroke="#b8b8b8" stroke-width="0.7"/>
<rect x="460" y="72" width="80" height="48" fill="#fff"/><rect x="486.4" y="76.1" width="28.0" height="1.0" fill="#aaa"/><rect x="462.0" y="81.1" width="3.2" height="0.8" fill="#aaa"/><rect x="462.0" y="83.3" width="3.2" height="0.8" fill="#aaa"/><rect x="462.0" y="85.4" width="3.2" height="0.8" fill="#aaa"/><rect x="462.0" y="87.6" width="3.2" height="0.8" fill="#aaa"/><path d="M467.2 81.6H537.6" stroke="#eee" stroke-width="0.6"/><path d="M467.2 83.8H537.6" stroke="#eee" stroke-width="0.6"/><path d="M467.2 85.9H537.6" stroke="#eee" stroke-width="0.6"/><path d="M467.2 88.1H537.6" stroke="#eee" stroke-width="0.6"/><polyline points="470.7,85.7 477.8,86.3 484.8,86.5 491.8,85.5 498.9,86.0 505.9,86.5 513.0,86.3 520.0,86.4 527.0,86.5 534.1,86.7" fill="none" stroke="#5b9bd5" stroke-width="1.0" opacity="0.75"/><polyline points="470.7,84.3 477.8,84.7 484.8,85.2 491.8,83.4 498.9,85.2 505.9,85.5 513.0,85.3 520.0,85.5 527.0,85.6 534.1,85.8" fill="none" stroke="#ed7d31" stroke-width="1.0" opacity="0.75"/><polyline points="470.7,83.6 477.8,83.8 484.8,84.1 491.8,82.0 498.9,84.0 505.9,84.4 513.0,84.3 520.0,84.4 527.0,84.6 534.1,84.3" fill="none" stroke="#a5a5a5" stroke-width="1.0" opacity="0.75"/><polyline points="470.7,81.5 477.8,82.0 484.8,82.1 491.8,80.4 498.9,82.8 505.9,83.3 513.0,83.1 520.0,83.6 527.0,83.5 534.1,83.4" fill="none" stroke="#ffc000" stroke-width="1.0" opacity="0.75"/><path d="M467.2 87.8V103.7" stroke="#ddd" stroke-width="0.6"/><path d="M474.2 87.8V103.7" stroke="#ddd" stroke-width="0.6"/><path d="M481.3 87.8V103.7" stroke="#ddd" stroke-width="0.6"/><path d="M488.3 87.8V103.7" stroke="#ddd" stroke-width="0.6"/><path d="M495.4 87.8V103.7" stroke="#ddd" stroke-width="0.6"/><path d="M502.4 87.8V103.7" stroke="#ddd" stroke-width="0.6"/><path d="M509.4 87.8V103.7" stroke="#ddd" stroke-width="0.6"/><path d="M516.5 87.8V103.7" stroke="#ddd" stroke-width="0.6"/><path d="M523.5 87.8V103.7" stroke="#ddd" stroke-width="0.6"/><path d="M530.6 87.8V103.7" stroke="#ddd" stroke-width="0.6"/><path d="M537.6 87.8V103.7" stroke="#ddd" stroke-width="0.6"/><rect x="470.2" y="89.3" width="1" height="5.8" fill="#c4c4c4"/><rect x="470.2" y="101.3" width="1" height="1" fill="#aaa"/><rect x="477.3" y="89.3" width="1" height="8.6" fill="#c4c4c4"/><rect x="477.3" y="101.3" width="1" height="1" fill="#aaa"/><rect x="484.3" y="89.3" width="1" height="11.5" fill="#c4c4c4"/><rect x="484.3" y="101.3" width="1" height="1" fill="#aaa"/><rect x="491.3" y="89.3" width="1" height="5.8" fill="#c4c4c4"/><rect x="491.3" y="101.3" width="1" height="1" fill="#aaa"/><rect x="498.4" y="89.3" width="1" height="8.6" fill="#c4c4c4"/><rect x="498.4" y="101.3" width="1" height="1" fill="#aaa"/><rect x="505.4" y="89.3" width="1" height="11.5" fill="#c4c4c4"/><rect x="505.4" y="101.3" width="1" height="1" fill="#aaa"/><rect x="512.5" y="89.3" width="1" height="5.8" fill="#c4c4c4"/><rect x="512.5" y="101.3" width="1" height="1" fill="#aaa"/><rect x="519.5" y="89.3" width="1" height="8.6" fill="#c4c4c4"/><rect x="519.5" y="101.3" width="1" height="1" fill="#aaa"/><rect x="526.5" y="89.3" width="1" height="11.5" fill="#c4c4c4"/><rect x="526.5" y="101.3" width="1" height="1" fill="#aaa"/><rect x="533.6" y="89.3" width="1" height="5.8" fill="#c4c4c4"/><rect x="533.6" y="101.3" width="1" height="1" fill="#aaa"/><path d="M476.8 105.6H481.6" stroke="#ffc000" stroke-width="1.2"/><path d="M482.4 105.6H521.6" stroke="#b8b8b8" stroke-width="0.7"/><path d="M476.8 109.4H481.6" stroke="#a5a5a5" stroke-width="1.2"/><path d="M482.4 109.4H521.6" stroke="#b8b8b8" stroke-width="0.7"/><path d="M476.8 113.3H481.6" stroke="#ed7d31" stroke-width="1.2"/><path d="M482.4 113.3H521.6" stroke="#b8b8b8" stroke-width="0.7"/><path d="M476.8 117.1H481.6" stroke="#5b9bd5" stroke-width="1.2"/><path d="M482.4 117.1H521.6" stroke="#b8b8b8" stroke-width="0.7"/>
<rect x="545.5" y="66.5" width="15" height="59" fill="#fff" stroke="#c6c6c6"/>
<rect x="546" y="67" width="14" height="21" fill="#e4e4e4"/>
<path d="M545.5 88.5h15M545.5 107.5h15" stroke="#c6c6c6"/>
<path d="M550 80.5h6l-3-3.5z" fill="#b0b0b0"/>
<path d="M550 96h6l-3 3.5z" fill="#555"/>
<path d="M550 113.5h6" stroke="#555" stroke-width="1.2"/>
<path d="M550 116h6l-3 3.5z" fill="#555"/>
</svg>
<div class="a" style="left:0;top:782px;width:26px;height:16px;overflow:hidden">
<div class="t" style="left:6.50px;top:6.00px;font-family:'Liberation Sans', sans-serif;font-size:12.8px;color:#333;font-weight:normal;font-style:normal;">28</div>
</div>
<svg style="left:0;top:0" width="891" height="849">
<g opacity="0.45">
<rect x="22.5" y="771.5" width="65" height="51" rx="6" fill="none" stroke="#cfcfcf" stroke-width="1.5"/>
<rect x="27.5" y="776.5" width="55" height="41" rx="3" fill="rgba(255,255,255,0.35)" stroke="#9a9a9a" stroke-width="5"/>
<path d="M32 780l21 21" stroke="#8e8e8e" stroke-width="3.2" stroke-linecap="round"/>
<path d="M30.5 778.5l12 2.5-9.5 9.5z" fill="#8e8e8e"/>
<path d="M45 826.5v-3h18v3" fill="none" stroke="#cfcfcf" stroke-width="1.5"/>
<path d="M32 812l-3 3 3 3M56 812l3 3-3 3" fill="none" stroke="#c8c8c8" stroke-width="1"/>
</g>
</svg>
<svg style="left:0;top:0" width="891" height="849">
<text x="94.5" y="809.3" font-family="Liberation Sans" font-weight="bold" font-size="34.5" fill="rgba(246,140,162,0.45)" stroke="rgba(246,140,162,0.45)" stroke-width="2.2" stroke-linejoin="round" textLength="54" lengthAdjust="spacingAndGlyphs">OS</text>
<text x="161" y="809.5" font-family="Liberation Sans" font-weight="bold" font-size="34.5" fill="rgba(255,255,255,0.4)" stroke="rgba(160,160,160,0.45)" stroke-width="1.8" stroke-linejoin="round" textLength="123.5" lengthAdjust="spacingAndGlyphs">Helper</text>
</svg>
</body></html>
